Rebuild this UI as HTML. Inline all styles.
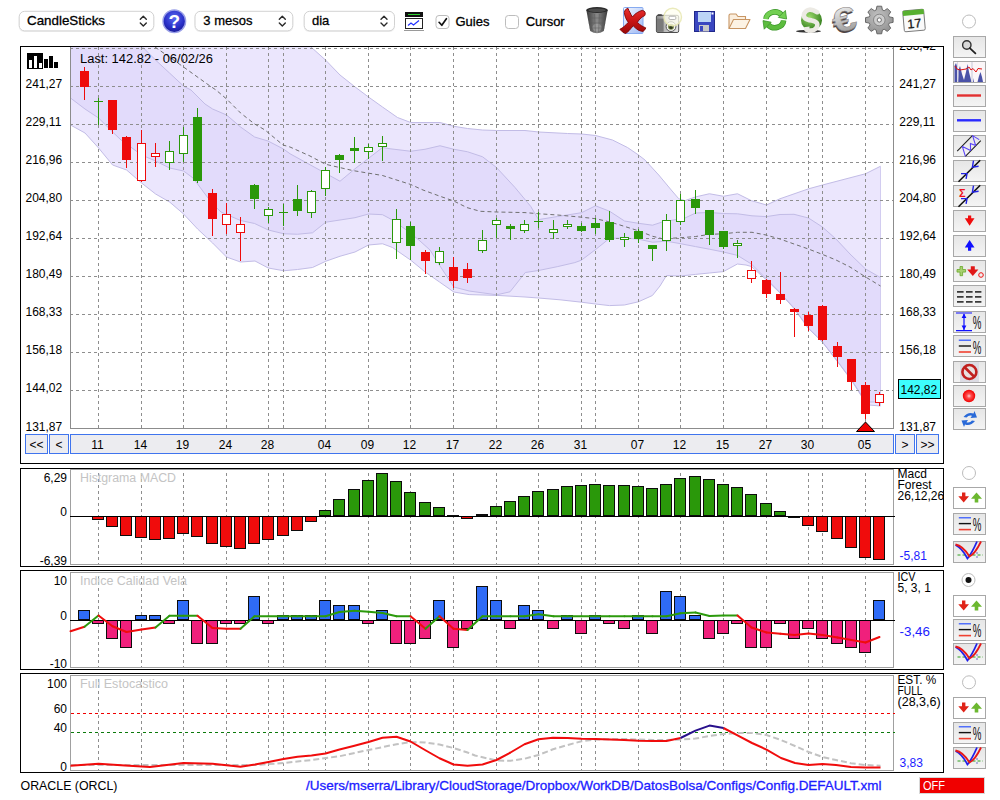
<!DOCTYPE html>
<html><head><meta charset="utf-8"><title>ORACLE (ORCL)</title>
<style>
html,body{margin:0;padding:0;background:#fff;overflow:hidden}
svg{display:block}
text{font-family:'Liberation Sans', sans-serif;}
</style></head><body>
<svg width="1000" height="800" viewBox="0 0 1000 800">
<defs>
<clipPath id="cpMain"><rect x="70" y="47" width="824" height="381"/></clipPath>
<clipPath id="cpR"><rect x="894" y="460" width="49.5" height="320"/></clipPath>
<clipPath id="cpAxis"><rect x="21" y="47" width="922" height="400"/></clipPath>
<linearGradient id="btn" x1="0" y1="0" x2="0" y2="1"><stop offset="0" stop-color="#e6e6e6"/><stop offset="1" stop-color="#f4f4f4"/></linearGradient>
<radialGradient id="help" cx="0.5" cy="0.35" r="0.7"><stop offset="0" stop-color="#5a6af0"/><stop offset="0.6" stop-color="#2a30c8"/><stop offset="1" stop-color="#15158a"/></radialGradient>
<radialGradient id="redball" cx="0.5" cy="0.5" r="0.5"><stop offset="0" stop-color="#ffd0d0"/><stop offset="0.35" stop-color="#ff5050"/><stop offset="1" stop-color="#f00000"/></radialGradient>
<linearGradient id="trash" x1="0" y1="0" x2="1" y2="0"><stop offset="0" stop-color="#3a3a3a"/><stop offset="0.5" stop-color="#8a8a8a"/><stop offset="1" stop-color="#3a3a3a"/></linearGradient>
<radialGradient id="gball" cx="0.4" cy="0.35" r="0.7"><stop offset="0" stop-color="#9ad86a"/><stop offset="1" stop-color="#2f7a1a"/></radialGradient>
<linearGradient id="silver" x1="0" y1="0" x2="0" y2="1"><stop offset="0" stop-color="#fafafa"/><stop offset="0.5" stop-color="#c4c4c4"/><stop offset="1" stop-color="#8c8c8c"/></linearGradient>
<radialGradient id="gearg" cx="0.45" cy="0.35" r="0.75"><stop offset="0" stop-color="#c2c2c2"/><stop offset="1" stop-color="#8a8a8a"/></radialGradient>
<linearGradient id="pageg" x1="0" y1="0" x2="1" y2="1"><stop offset="0" stop-color="#f4f8ff"/><stop offset="1" stop-color="#9db8f4"/></linearGradient>
<linearGradient id="xred" x1="0" y1="0" x2="0" y2="1"><stop offset="0" stop-color="#e83030"/><stop offset="0.5" stop-color="#c81414"/><stop offset="1" stop-color="#9a0808"/></linearGradient>
<linearGradient id="camg" x1="0" y1="0" x2="1" y2="0"><stop offset="0" stop-color="#8a8a8a"/><stop offset="0.35" stop-color="#b8b8b8"/><stop offset="1" stop-color="#e6e6e6"/></linearGradient>
</defs>
<rect x="0" y="0" width="1000" height="800" fill="#fff"/>
<g clip-path="url(#cpMain)">
<polygon points="70.50,47.00 311.00,47.00 325.50,60.00 340.00,75.00 354.50,86.50 368.50,97.00 382.50,107.00 397.50,117.50 410.75,122.50 440.00,122.50 453.75,126.25 467.50,128.50 482.50,130.00 496.50,130.50 525.00,130.50 538.75,132.00 567.50,133.50 581.75,134.00 595.50,135.50 612.50,140.00 627.50,147.50 638.50,155.00 645.00,160.00 658.75,175.00 671.25,190.00 678.75,198.75 685.00,200.60 695.60,196.90 709.40,193.75 723.50,196.25 737.50,193.75 751.25,200.60 766.50,205.00 780.00,198.75 808.75,188.75 822.50,185.00 865.50,173.75 880.50,166.25 880.50,406.00 880.50,406.00 869.00,405.00 862.00,397.00 851.60,380.50 837.40,361.50 822.40,342.00 808.40,328.50 794.00,308.50 780.00,293.00 766.50,280.00 751.40,266.50 746.00,265.00 737.40,264.00 723.40,271.60 709.40,273.00 695.40,274.40 680.60,276.00 666.40,275.60 660.00,286.00 652.40,295.50 638.40,301.80 624.40,305.00 609.50,305.60 595.60,304.00 581.40,302.20 560.00,299.80 538.50,298.00 525.00,297.00 496.70,295.40 469.20,294.60 453.80,292.00 439.50,282.00 425.20,272.00 410.50,260.00 392.50,247.50 382.50,243.75 368.50,245.00 355.00,252.00 340.00,256.25 325.75,261.25 312.50,267.50 297.50,269.50 283.75,270.75 268.25,268.00 255.00,261.00 240.50,262.00 226.50,257.00 212.60,243.00 197.60,229.00 183.60,214.00 169.60,202.00 155.60,194.00 141.60,183.00 126.60,170.00 112.60,165.00 98.60,148.00 85.00,133.00 70.50,125.00" fill="#ebe6fd"/>
<polygon points="70.50,47.00 142.50,47.00 155.50,60.00 169.50,73.00 183.75,86.25 191.00,90.00 205.00,104.00 212.60,109.00 226.60,115.00 240.60,127.00 254.60,137.00 268.00,141.00 283.50,149.00 290.00,153.75 315.00,167.50 340.00,181.25 355.00,168.75 382.50,147.50 390.00,148.75 410.75,151.25 425.00,149.25 440.00,145.75 453.75,149.25 467.50,151.75 482.50,156.75 496.50,167.50 515.00,187.50 527.50,202.50 530.80,206.50 538.50,219.60 557.50,216.50 581.60,212.70 595.50,205.80 609.50,211.20 624.50,221.00 638.50,223.30 652.50,225.20 662.50,221.90 685.00,218.00 695.60,213.00 709.40,212.50 723.50,213.50 737.50,213.80 752.00,215.80 766.50,216.60 780.00,214.50 794.00,214.30 808.50,218.00 822.40,227.00 836.00,239.00 850.00,254.00 865.60,269.00 880.50,277.60 880.50,402.00 880.50,402.00 869.00,402.00 862.00,396.00 851.60,380.00 837.40,361.00 822.40,342.00 808.40,328.00 794.00,308.00 780.00,292.50 766.50,279.00 751.40,264.00 737.50,255.40 723.50,252.00 709.40,249.20 695.60,246.60 680.00,243.60 666.50,241.20 652.50,242.20 638.40,239.20 624.40,238.00 609.50,238.40 595.60,249.50 581.40,260.20 574.80,262.60 557.20,266.70 538.50,270.50 525.30,272.50 510.00,291.80 496.70,294.80 469.20,291.00 453.80,287.00 440.00,266.00 430.00,250.00 420.00,241.00 410.50,233.00 392.50,220.00 382.50,214.70 368.50,214.00 355.00,217.70 340.00,220.00 325.75,222.20 312.50,232.80 297.50,234.25 283.75,233.75 268.25,230.00 254.60,223.50 240.60,220.50 226.60,214.50 221.00,212.00 212.60,204.00 205.00,194.00 197.60,184.00 193.00,178.00 183.60,171.00 169.60,168.00 155.60,161.00 141.60,155.00 126.60,144.00 121.00,140.00 112.60,132.00 98.60,118.00 85.00,109.00 70.50,98.00" fill="#e2dbfb"/>
<polyline points="311.00,47.00 325.50,60.00 340.00,75.00 354.50,86.50 368.50,97.00 382.50,107.00 397.50,117.50 410.75,122.50 440.00,122.50 453.75,126.25 467.50,128.50 482.50,130.00 496.50,130.50 525.00,130.50 538.75,132.00 567.50,133.50 581.75,134.00 595.50,135.50 612.50,140.00 627.50,147.50 638.50,155.00 645.00,160.00 658.75,175.00 671.25,190.00 678.75,198.75 685.00,200.60 695.60,196.90 709.40,193.75 723.50,196.25 737.50,193.75 751.25,200.60 766.50,205.00 780.00,198.75 808.75,188.75 822.50,185.00 865.50,173.75 880.50,166.25" fill="none" stroke="#c2bce6" stroke-width="1"/>
<polyline points="70.50,125.00 85.00,133.00 98.60,148.00 112.60,165.00 126.60,170.00 141.60,183.00 155.60,194.00 169.60,202.00 183.60,214.00 197.60,229.00 212.60,243.00 226.50,257.00 240.50,262.00 255.00,261.00 268.25,268.00 283.75,270.75 297.50,269.50 312.50,267.50 325.75,261.25 340.00,256.25 355.00,252.00 368.50,245.00 382.50,243.75 392.50,247.50 410.50,260.00 425.20,272.00 439.50,282.00 453.80,292.00 469.20,294.60 496.70,295.40 525.00,297.00 538.50,298.00 560.00,299.80 581.40,302.20 595.60,304.00 609.50,305.60 624.40,305.00 638.40,301.80 652.40,295.50 660.00,286.00 666.40,275.60 680.60,276.00 695.40,274.40 709.40,273.00 723.40,271.60 737.40,264.00 746.00,265.00 751.40,266.50 766.50,280.00 780.00,293.00 794.00,308.50 808.40,328.50 822.40,342.00 837.40,361.50 851.60,380.50 862.00,397.00 869.00,405.00 880.50,406.00" fill="none" stroke="#c2bce6" stroke-width="1"/>
<polyline points="142.50,47.00 155.50,60.00 169.50,73.00 183.75,86.25 191.00,90.00 205.00,104.00 212.60,109.00 226.60,115.00 240.60,127.00 254.60,137.00 268.00,141.00 283.50,149.00 290.00,153.75 315.00,167.50 340.00,181.25 355.00,168.75 382.50,147.50 390.00,148.75 410.75,151.25 425.00,149.25 440.00,145.75 453.75,149.25 467.50,151.75 482.50,156.75 496.50,167.50 515.00,187.50 527.50,202.50 530.80,206.50 538.50,219.60 557.50,216.50 581.60,212.70 595.50,205.80 609.50,211.20 624.50,221.00 638.50,223.30 652.50,225.20 662.50,221.90 685.00,218.00 695.60,213.00 709.40,212.50 723.50,213.50 737.50,213.80 752.00,215.80 766.50,216.60 780.00,214.50 794.00,214.30 808.50,218.00 822.40,227.00 836.00,239.00 850.00,254.00 865.60,269.00 880.50,277.60" fill="none" stroke="#c2bce6" stroke-width="1"/>
<polyline points="70.50,98.00 85.00,109.00 98.60,118.00 112.60,132.00 121.00,140.00 126.60,144.00 141.60,155.00 155.60,161.00 169.60,168.00 183.60,171.00 193.00,178.00 197.60,184.00 205.00,194.00 212.60,204.00 221.00,212.00 226.60,214.50 240.60,220.50 254.60,223.50 268.25,230.00 283.75,233.75 297.50,234.25 312.50,232.80 325.75,222.20 340.00,220.00 355.00,217.70 368.50,214.00 382.50,214.70 392.50,220.00 410.50,233.00 420.00,241.00 430.00,250.00 440.00,266.00 453.80,287.00 469.20,291.00 496.70,294.80 510.00,291.80 525.30,272.50 538.50,270.50 557.20,266.70 574.80,262.60 581.40,260.20 595.60,249.50 609.50,238.40 624.40,238.00 638.40,239.20 652.50,242.20 666.50,241.20 680.00,243.60 695.60,246.60 709.40,249.20 723.50,252.00 737.50,255.40 751.40,264.00 766.50,279.00 780.00,292.50 794.00,308.00 808.40,328.00 822.40,342.00 837.40,361.00 851.60,380.00 862.00,396.00 869.00,402.00 880.50,402.00" fill="none" stroke="#c2bce6" stroke-width="1"/>
<line x1="880.5" y1="166.25" x2="880.5" y2="406" stroke="#d2ccf0" stroke-width="1"/>
</g>
<g shape-rendering="crispEdges">
<line x1="70" y1="48.5" x2="894" y2="48.5" stroke="#8e8e8e" stroke-width="1" stroke-dasharray="3 3"/>
<line x1="70" y1="86.5" x2="894" y2="86.5" stroke="#8e8e8e" stroke-width="1" stroke-dasharray="3 3"/>
<line x1="70" y1="124.5" x2="894" y2="124.5" stroke="#8e8e8e" stroke-width="1" stroke-dasharray="3 3"/>
<line x1="70" y1="162.5" x2="894" y2="162.5" stroke="#8e8e8e" stroke-width="1" stroke-dasharray="3 3"/>
<line x1="70" y1="200.5" x2="894" y2="200.5" stroke="#8e8e8e" stroke-width="1" stroke-dasharray="3 3"/>
<line x1="70" y1="238.5" x2="894" y2="238.5" stroke="#8e8e8e" stroke-width="1" stroke-dasharray="3 3"/>
<line x1="70" y1="276.5" x2="894" y2="276.5" stroke="#8e8e8e" stroke-width="1" stroke-dasharray="3 3"/>
<line x1="70" y1="314.5" x2="894" y2="314.5" stroke="#8e8e8e" stroke-width="1" stroke-dasharray="3 3"/>
<line x1="70" y1="352.5" x2="894" y2="352.5" stroke="#8e8e8e" stroke-width="1" stroke-dasharray="3 3"/>
<line x1="70" y1="390.5" x2="894" y2="390.5" stroke="#8e8e8e" stroke-width="1" stroke-dasharray="3 3"/>
<line x1="98.5" y1="47" x2="98.5" y2="428" stroke="#8e8e8e" stroke-width="1" stroke-dasharray="3 3"/>
<line x1="141.5" y1="47" x2="141.5" y2="428" stroke="#8e8e8e" stroke-width="1" stroke-dasharray="3 3"/>
<line x1="183.5" y1="47" x2="183.5" y2="428" stroke="#8e8e8e" stroke-width="1" stroke-dasharray="3 3"/>
<line x1="226.5" y1="47" x2="226.5" y2="428" stroke="#8e8e8e" stroke-width="1" stroke-dasharray="3 3"/>
<line x1="268.5" y1="47" x2="268.5" y2="428" stroke="#8e8e8e" stroke-width="1" stroke-dasharray="3 3"/>
<line x1="283.5" y1="47" x2="283.5" y2="428" stroke="#8e8e8e" stroke-width="1" stroke-dasharray="3 3"/>
<line x1="325.5" y1="47" x2="325.5" y2="428" stroke="#8e8e8e" stroke-width="1" stroke-dasharray="3 3"/>
<line x1="368.5" y1="47" x2="368.5" y2="428" stroke="#8e8e8e" stroke-width="1" stroke-dasharray="3 3"/>
<line x1="410.5" y1="47" x2="410.5" y2="428" stroke="#8e8e8e" stroke-width="1" stroke-dasharray="3 3"/>
<line x1="453.5" y1="47" x2="453.5" y2="428" stroke="#8e8e8e" stroke-width="1" stroke-dasharray="3 3"/>
<line x1="496.5" y1="47" x2="496.5" y2="428" stroke="#8e8e8e" stroke-width="1" stroke-dasharray="3 3"/>
<line x1="538.5" y1="47" x2="538.5" y2="428" stroke="#8e8e8e" stroke-width="1" stroke-dasharray="3 3"/>
<line x1="581.5" y1="47" x2="581.5" y2="428" stroke="#8e8e8e" stroke-width="1" stroke-dasharray="3 3"/>
<line x1="595.5" y1="47" x2="595.5" y2="428" stroke="#8e8e8e" stroke-width="1" stroke-dasharray="3 3"/>
<line x1="638.5" y1="47" x2="638.5" y2="428" stroke="#8e8e8e" stroke-width="1" stroke-dasharray="3 3"/>
<line x1="680.5" y1="47" x2="680.5" y2="428" stroke="#8e8e8e" stroke-width="1" stroke-dasharray="3 3"/>
<line x1="723.5" y1="47" x2="723.5" y2="428" stroke="#8e8e8e" stroke-width="1" stroke-dasharray="3 3"/>
<line x1="766.5" y1="47" x2="766.5" y2="428" stroke="#8e8e8e" stroke-width="1" stroke-dasharray="3 3"/>
<line x1="808.5" y1="47" x2="808.5" y2="428" stroke="#8e8e8e" stroke-width="1" stroke-dasharray="3 3"/>
<line x1="822.5" y1="47" x2="822.5" y2="428" stroke="#8e8e8e" stroke-width="1" stroke-dasharray="3 3"/>
<line x1="865.5" y1="47" x2="865.5" y2="428" stroke="#8e8e8e" stroke-width="1" stroke-dasharray="3 3"/>
</g>
<g clip-path="url(#cpMain)"><polyline points="155.00,47.00 183.50,67.00 210.00,86.00 216.00,90.00 226.60,99.00 240.60,113.00 254.60,124.00 265.00,130.00 283.00,145.00 290.00,147.00 310.00,156.00 325.50,164.25 352.50,170.50 382.50,175.50 410.75,184.50 423.00,190.00 440.00,196.25 453.80,201.00 467.00,207.60 480.20,211.30 496.70,212.00 525.00,212.60 538.75,213.75 557.50,215.00 581.75,217.20 595.50,218.70 610.00,222.00 620.00,225.00 638.50,230.80 652.50,236.25 662.50,238.75 680.00,237.75 695.60,236.50 709.40,234.40 723.50,233.75 737.50,232.30 752.00,232.30 766.00,235.00 780.00,239.00 794.00,244.00 808.40,249.00 822.40,254.40 836.00,260.00 850.00,267.00 865.60,277.00 880.50,286.00" fill="none" stroke="#707070" stroke-width="1" stroke-dasharray="4 3"/></g>
<g shape-rendering="crispEdges">
<line x1="70.5" y1="47" x2="70.5" y2="429" stroke="#8c8c8c" stroke-width="1"/>
<line x1="893.5" y1="47" x2="893.5" y2="429" stroke="#8c8c8c" stroke-width="1"/>
<line x1="70" y1="428.5" x2="894" y2="428.5" stroke="#8c8c8c" stroke-width="1"/>
</g>
<g shape-rendering="crispEdges">
<rect x="84" y="67" width="1" height="33" fill="#ee0b0b"/>
<rect x="80" y="71" width="9" height="16" fill="#ee0b0b"/>
<rect x="98" y="98" width="1" height="27" fill="#2a980a"/>
<rect x="94" y="101" width="9" height="1" fill="#2a980a"/>
<rect x="112" y="100" width="1" height="34" fill="#ee0b0b"/>
<rect x="108" y="100" width="9" height="30" fill="#ee0b0b"/>
<rect x="126" y="136" width="1" height="32" fill="#ee0b0b"/>
<rect x="122" y="137" width="9" height="23" fill="#ee0b0b"/>
<rect x="141" y="130" width="1" height="52" fill="#ee0b0b"/>
<rect x="137.5" y="143.5" width="8" height="37" fill="#fff" stroke="#ee0b0b" stroke-width="1"/>
<rect x="155" y="143" width="1" height="24" fill="#ee0b0b"/>
<rect x="151.5" y="153.5" width="8" height="3" fill="#fff" stroke="#ee0b0b" stroke-width="1"/>
<rect x="169" y="141" width="1" height="29" fill="#2a980a"/>
<rect x="165.5" y="151.5" width="8" height="11" fill="#fff" stroke="#2a980a" stroke-width="1"/>
<rect x="183" y="127" width="1" height="35" fill="#2a980a"/>
<rect x="179.5" y="135.5" width="8" height="18" fill="#fff" stroke="#2a980a" stroke-width="1"/>
<rect x="197" y="108" width="1" height="75" fill="#2a980a"/>
<rect x="193" y="117" width="9" height="64" fill="#2a980a"/>
<rect x="212" y="189" width="1" height="47" fill="#ee0b0b"/>
<rect x="208" y="193" width="9" height="26" fill="#ee0b0b"/>
<rect x="226" y="203" width="1" height="31" fill="#ee0b0b"/>
<rect x="222.5" y="214.5" width="8" height="10" fill="#fff" stroke="#ee0b0b" stroke-width="1"/>
<rect x="240" y="217" width="1" height="44" fill="#ee0b0b"/>
<rect x="236.5" y="224.5" width="8" height="8" fill="#fff" stroke="#ee0b0b" stroke-width="1"/>
<rect x="254" y="184" width="1" height="25" fill="#2a980a"/>
<rect x="250" y="185" width="9" height="14" fill="#2a980a"/>
<rect x="268" y="207" width="1" height="16" fill="#2a980a"/>
<rect x="264.5" y="209.5" width="8" height="6" fill="#fff" stroke="#2a980a" stroke-width="1"/>
<rect x="283" y="204" width="1" height="22" fill="#2a980a"/>
<rect x="279" y="212" width="9" height="1" fill="#2a980a"/>
<rect x="297" y="185" width="1" height="31" fill="#2a980a"/>
<rect x="293" y="199" width="9" height="12" fill="#2a980a"/>
<rect x="311" y="190" width="1" height="28" fill="#2a980a"/>
<rect x="307.5" y="191.5" width="8" height="21" fill="#fff" stroke="#2a980a" stroke-width="1"/>
<rect x="325" y="167" width="1" height="29" fill="#2a980a"/>
<rect x="321.5" y="170.5" width="8" height="18" fill="#fff" stroke="#2a980a" stroke-width="1"/>
<rect x="339" y="154" width="1" height="19" fill="#2a980a"/>
<rect x="335" y="155" width="9" height="5" fill="#2a980a"/>
<rect x="354" y="137" width="1" height="26" fill="#2a980a"/>
<rect x="350" y="148" width="9" height="3" fill="#2a980a"/>
<rect x="368" y="144" width="1" height="15" fill="#2a980a"/>
<rect x="364.5" y="147.5" width="8" height="4" fill="#fff" stroke="#2a980a" stroke-width="1"/>
<rect x="382" y="136" width="1" height="25" fill="#2a980a"/>
<rect x="378.5" y="143.5" width="8" height="3" fill="#fff" stroke="#2a980a" stroke-width="1"/>
<rect x="396" y="209" width="1" height="50" fill="#2a980a"/>
<rect x="392.5" y="219.5" width="8" height="23" fill="#fff" stroke="#2a980a" stroke-width="1"/>
<rect x="410" y="222" width="1" height="38" fill="#2a980a"/>
<rect x="406" y="226" width="9" height="20" fill="#2a980a"/>
<rect x="425" y="250" width="1" height="24" fill="#ee0b0b"/>
<rect x="421" y="252" width="9" height="9" fill="#ee0b0b"/>
<rect x="439" y="247" width="1" height="18" fill="#2a980a"/>
<rect x="435.5" y="251.5" width="8" height="11" fill="#fff" stroke="#2a980a" stroke-width="1"/>
<rect x="453" y="257" width="1" height="31" fill="#ee0b0b"/>
<rect x="449" y="267" width="9" height="14" fill="#ee0b0b"/>
<rect x="467" y="263" width="1" height="20" fill="#ee0b0b"/>
<rect x="463" y="269" width="9" height="9" fill="#ee0b0b"/>
<rect x="482" y="230" width="1" height="23" fill="#2a980a"/>
<rect x="478.5" y="240.5" width="8" height="10" fill="#fff" stroke="#2a980a" stroke-width="1"/>
<rect x="496" y="218" width="1" height="20" fill="#2a980a"/>
<rect x="492.5" y="220.5" width="8" height="4" fill="#fff" stroke="#2a980a" stroke-width="1"/>
<rect x="510" y="224" width="1" height="16" fill="#2a980a"/>
<rect x="506" y="226" width="9" height="3" fill="#2a980a"/>
<rect x="524" y="220" width="1" height="13" fill="#2a980a"/>
<rect x="520.5" y="224.5" width="8" height="6" fill="#fff" stroke="#2a980a" stroke-width="1"/>
<rect x="538" y="212" width="1" height="16" fill="#2a980a"/>
<rect x="534" y="221" width="9" height="1" fill="#2a980a"/>
<rect x="553" y="220" width="1" height="19" fill="#2a980a"/>
<rect x="549.5" y="229.5" width="8" height="3" fill="#fff" stroke="#2a980a" stroke-width="1"/>
<rect x="567" y="220" width="1" height="9" fill="#2a980a"/>
<rect x="563.5" y="224.5" width="8" height="2" fill="#fff" stroke="#2a980a" stroke-width="1"/>
<rect x="581" y="223" width="1" height="9" fill="#2a980a"/>
<rect x="577" y="226" width="9" height="5" fill="#2a980a"/>
<rect x="595" y="218" width="1" height="16" fill="#2a980a"/>
<rect x="591" y="223" width="9" height="5" fill="#2a980a"/>
<rect x="609" y="211" width="1" height="31" fill="#2a980a"/>
<rect x="605" y="222" width="9" height="18" fill="#2a980a"/>
<rect x="624" y="233" width="1" height="14" fill="#2a980a"/>
<rect x="620.5" y="237.5" width="8" height="2" fill="#fff" stroke="#2a980a" stroke-width="1"/>
<rect x="638" y="229" width="1" height="14" fill="#2a980a"/>
<rect x="634" y="231" width="9" height="8" fill="#2a980a"/>
<rect x="652" y="245" width="1" height="16" fill="#2a980a"/>
<rect x="648" y="245" width="9" height="4" fill="#2a980a"/>
<rect x="666" y="214" width="1" height="37" fill="#2a980a"/>
<rect x="662.5" y="220.5" width="8" height="20" fill="#fff" stroke="#2a980a" stroke-width="1"/>
<rect x="680" y="194" width="1" height="31" fill="#2a980a"/>
<rect x="676.5" y="200.5" width="8" height="21" fill="#fff" stroke="#2a980a" stroke-width="1"/>
<rect x="695" y="190" width="1" height="24" fill="#2a980a"/>
<rect x="691" y="199" width="9" height="9" fill="#2a980a"/>
<rect x="709" y="210" width="1" height="35" fill="#2a980a"/>
<rect x="705" y="210" width="9" height="25" fill="#2a980a"/>
<rect x="723" y="231" width="1" height="18" fill="#2a980a"/>
<rect x="719" y="231" width="9" height="16" fill="#2a980a"/>
<rect x="737" y="240" width="1" height="18" fill="#2a980a"/>
<rect x="733.5" y="243.5" width="8" height="2" fill="#fff" stroke="#2a980a" stroke-width="1"/>
<rect x="751" y="261" width="1" height="22" fill="#ee0b0b"/>
<rect x="747.5" y="270.5" width="8" height="8" fill="#fff" stroke="#ee0b0b" stroke-width="1"/>
<rect x="766" y="279" width="1" height="19" fill="#ee0b0b"/>
<rect x="762" y="280" width="9" height="14" fill="#ee0b0b"/>
<rect x="780" y="272" width="1" height="32" fill="#ee0b0b"/>
<rect x="776" y="294" width="9" height="6" fill="#ee0b0b"/>
<rect x="794" y="308" width="1" height="29" fill="#ee0b0b"/>
<rect x="790" y="309" width="9" height="3" fill="#ee0b0b"/>
<rect x="808" y="312" width="1" height="19" fill="#ee0b0b"/>
<rect x="804" y="315" width="9" height="11" fill="#ee0b0b"/>
<rect x="822" y="305" width="1" height="36" fill="#ee0b0b"/>
<rect x="818" y="306" width="9" height="34" fill="#ee0b0b"/>
<rect x="837" y="342" width="1" height="25" fill="#ee0b0b"/>
<rect x="833" y="346" width="9" height="11" fill="#ee0b0b"/>
<rect x="851" y="359" width="1" height="31" fill="#ee0b0b"/>
<rect x="847" y="359" width="9" height="23" fill="#ee0b0b"/>
<rect x="865" y="382" width="1" height="37" fill="#ee0b0b"/>
<rect x="861" y="385" width="9" height="29" fill="#ee0b0b"/>
<rect x="879" y="392" width="1" height="14" fill="#ee0b0b"/>
<rect x="875.5" y="394.5" width="8" height="8" fill="#fff" stroke="#ee0b0b" stroke-width="1"/>
</g>
<polygon points="865.5,422 856.5,431.5 874.5,431.5" fill="#f00000" stroke="#000" stroke-width="1"/>
<g clip-path="url(#cpAxis)">
<text x="899.3" y="50" font-size="12" fill="#000" text-anchor="start" >253,42</text>
<text x="25.5" y="88" font-size="12" fill="#000" text-anchor="start" >241,27</text>
<text x="899.3" y="88" font-size="12" fill="#000" text-anchor="start" >241,27</text>
<text x="25.5" y="126" font-size="12" fill="#000" text-anchor="start" >229,11</text>
<text x="899.3" y="126" font-size="12" fill="#000" text-anchor="start" >229,11</text>
<text x="25.5" y="164" font-size="12" fill="#000" text-anchor="start" >216,96</text>
<text x="899.3" y="164" font-size="12" fill="#000" text-anchor="start" >216,96</text>
<text x="25.5" y="202" font-size="12" fill="#000" text-anchor="start" >204,80</text>
<text x="899.3" y="202" font-size="12" fill="#000" text-anchor="start" >204,80</text>
<text x="25.5" y="240" font-size="12" fill="#000" text-anchor="start" >192,64</text>
<text x="899.3" y="240" font-size="12" fill="#000" text-anchor="start" >192,64</text>
<text x="25.5" y="278" font-size="12" fill="#000" text-anchor="start" >180,49</text>
<text x="899.3" y="278" font-size="12" fill="#000" text-anchor="start" >180,49</text>
<text x="25.5" y="316" font-size="12" fill="#000" text-anchor="start" >168,33</text>
<text x="899.3" y="316" font-size="12" fill="#000" text-anchor="start" >168,33</text>
<text x="25.5" y="354" font-size="12" fill="#000" text-anchor="start" >156,18</text>
<text x="899.3" y="354" font-size="12" fill="#000" text-anchor="start" >156,18</text>
<text x="25.5" y="392" font-size="12" fill="#000" text-anchor="start" >144,02</text>
<text x="25.5" y="431" font-size="12" fill="#000" text-anchor="start" >131,87</text>
<text x="899.3" y="431" font-size="12" fill="#000" text-anchor="start" >131,87</text>
</g>
<text x="80" y="63" font-size="12" fill="#000" text-anchor="start"  textLength="133" lengthAdjust="spacingAndGlyphs">Last: 142.82 - 06/02/26</text>
<rect x="898.5" y="379.5" width="42" height="19" fill="#3dfdfd" stroke="#000" stroke-width="1" shape-rendering="crispEdges"/>
<text x="900.5" y="394" font-size="12" fill="#000" text-anchor="start" >142,82</text>
<g shape-rendering="crispEdges">
<rect x="27" y="53" width="16" height="16" fill="#000"/>
<rect x="29" y="60" width="3" height="8" fill="#fff"/><rect x="34" y="56" width="3" height="12" fill="#fff"/><rect x="39" y="63" width="3" height="5" fill="#fff"/>
<rect x="44" y="59" width="4" height="9" fill="#000"/><rect x="49" y="56" width="4" height="12" fill="#000"/><rect x="54" y="62" width="4" height="6" fill="#000"/>
</g>
<g shape-rendering="crispEdges">
<rect x="25.5" y="434.5" width="22" height="19" fill="#ececf0" stroke="#3f74ee" stroke-width="1"/>
<rect x="49.5" y="434.5" width="19" height="19" fill="#ececf0" stroke="#3f74ee" stroke-width="1"/>
<rect x="70.5" y="434.5" width="823" height="19" fill="#ececf0" stroke="#3f74ee" stroke-width="1"/>
<rect x="895.5" y="434.5" width="19" height="19" fill="#ececf0" stroke="#3f74ee" stroke-width="1"/>
<rect x="916.5" y="434.5" width="22" height="19" fill="#ececf0" stroke="#3f74ee" stroke-width="1"/>
</g>
<text x="36.5" y="449" font-size="12" fill="#000" text-anchor="middle" >&lt;&lt;</text>
<text x="59" y="449" font-size="12" fill="#000" text-anchor="middle" >&lt;</text>
<text x="905" y="449" font-size="12" fill="#000" text-anchor="middle" >&gt;</text>
<text x="927.5" y="449" font-size="12" fill="#000" text-anchor="middle" >&gt;&gt;</text>
<text x="97.5" y="449" font-size="12" fill="#000" text-anchor="middle" >11</text>
<text x="140.5" y="449" font-size="12" fill="#000" text-anchor="middle" >14</text>
<text x="182.5" y="449" font-size="12" fill="#000" text-anchor="middle" >19</text>
<text x="225.5" y="449" font-size="12" fill="#000" text-anchor="middle" >24</text>
<text x="267.5" y="449" font-size="12" fill="#000" text-anchor="middle" >28</text>
<text x="324.5" y="449" font-size="12" fill="#000" text-anchor="middle" >04</text>
<text x="367.5" y="449" font-size="12" fill="#000" text-anchor="middle" >09</text>
<text x="409.5" y="449" font-size="12" fill="#000" text-anchor="middle" >12</text>
<text x="452.5" y="449" font-size="12" fill="#000" text-anchor="middle" >17</text>
<text x="495.5" y="449" font-size="12" fill="#000" text-anchor="middle" >22</text>
<text x="537.5" y="449" font-size="12" fill="#000" text-anchor="middle" >26</text>
<text x="580.5" y="449" font-size="12" fill="#000" text-anchor="middle" >31</text>
<text x="637.5" y="449" font-size="12" fill="#000" text-anchor="middle" >07</text>
<text x="679.5" y="449" font-size="12" fill="#000" text-anchor="middle" >12</text>
<text x="722.5" y="449" font-size="12" fill="#000" text-anchor="middle" >15</text>
<text x="765.5" y="449" font-size="12" fill="#000" text-anchor="middle" >27</text>
<text x="807.5" y="449" font-size="12" fill="#000" text-anchor="middle" >30</text>
<text x="864.5" y="449" font-size="12" fill="#000" text-anchor="middle" >05</text>
<rect x="20.5" y="46.5" width="923" height="417" fill="none" stroke="#000" stroke-width="1" shape-rendering="crispEdges"/>
<g shape-rendering="crispEdges">
<rect x="20.5" y="468.5" width="923" height="98" fill="none" stroke="#000" stroke-width="1"/>
<rect x="70.5" y="469.5" width="823" height="95" fill="none" stroke="#a0a0a0" stroke-width="1"/>
<line x1="98.5" y1="473" x2="98.5" y2="564" stroke="#8e8e8e" stroke-width="1" stroke-dasharray="3 3"/>
<line x1="141.5" y1="473" x2="141.5" y2="564" stroke="#8e8e8e" stroke-width="1" stroke-dasharray="3 3"/>
<line x1="183.5" y1="473" x2="183.5" y2="564" stroke="#8e8e8e" stroke-width="1" stroke-dasharray="3 3"/>
<line x1="226.5" y1="473" x2="226.5" y2="564" stroke="#8e8e8e" stroke-width="1" stroke-dasharray="3 3"/>
<line x1="268.5" y1="473" x2="268.5" y2="564" stroke="#8e8e8e" stroke-width="1" stroke-dasharray="3 3"/>
<line x1="283.5" y1="473" x2="283.5" y2="564" stroke="#8e8e8e" stroke-width="1" stroke-dasharray="3 3"/>
<line x1="325.5" y1="473" x2="325.5" y2="564" stroke="#8e8e8e" stroke-width="1" stroke-dasharray="3 3"/>
<line x1="368.5" y1="473" x2="368.5" y2="564" stroke="#8e8e8e" stroke-width="1" stroke-dasharray="3 3"/>
<line x1="410.5" y1="473" x2="410.5" y2="564" stroke="#8e8e8e" stroke-width="1" stroke-dasharray="3 3"/>
<line x1="453.5" y1="473" x2="453.5" y2="564" stroke="#8e8e8e" stroke-width="1" stroke-dasharray="3 3"/>
<line x1="496.5" y1="473" x2="496.5" y2="564" stroke="#8e8e8e" stroke-width="1" stroke-dasharray="3 3"/>
<line x1="538.5" y1="473" x2="538.5" y2="564" stroke="#8e8e8e" stroke-width="1" stroke-dasharray="3 3"/>
<line x1="581.5" y1="473" x2="581.5" y2="564" stroke="#8e8e8e" stroke-width="1" stroke-dasharray="3 3"/>
<line x1="595.5" y1="473" x2="595.5" y2="564" stroke="#8e8e8e" stroke-width="1" stroke-dasharray="3 3"/>
<line x1="638.5" y1="473" x2="638.5" y2="564" stroke="#8e8e8e" stroke-width="1" stroke-dasharray="3 3"/>
<line x1="680.5" y1="473" x2="680.5" y2="564" stroke="#8e8e8e" stroke-width="1" stroke-dasharray="3 3"/>
<line x1="723.5" y1="473" x2="723.5" y2="564" stroke="#8e8e8e" stroke-width="1" stroke-dasharray="3 3"/>
<line x1="766.5" y1="473" x2="766.5" y2="564" stroke="#8e8e8e" stroke-width="1" stroke-dasharray="3 3"/>
<line x1="808.5" y1="473" x2="808.5" y2="564" stroke="#8e8e8e" stroke-width="1" stroke-dasharray="3 3"/>
<line x1="822.5" y1="473" x2="822.5" y2="564" stroke="#8e8e8e" stroke-width="1" stroke-dasharray="3 3"/>
<line x1="865.5" y1="473" x2="865.5" y2="564" stroke="#8e8e8e" stroke-width="1" stroke-dasharray="3 3"/>
</g>
<text x="80" y="482" font-size="12" fill="#c4c4c4" text-anchor="start"  textLength="96" lengthAdjust="spacingAndGlyphs">Histgrama MACD</text>
<g shape-rendering="crispEdges">
<rect x="92.5" y="516.5" width="11" height="3" fill="#f00c0c" stroke="#0c0c0c" stroke-width="1"/>
<rect x="106.5" y="516.5" width="11" height="10" fill="#f00c0c" stroke="#0c0c0c" stroke-width="1"/>
<rect x="120.5" y="516.5" width="11" height="19" fill="#f00c0c" stroke="#0c0c0c" stroke-width="1"/>
<rect x="135.5" y="516.5" width="11" height="21" fill="#f00c0c" stroke="#0c0c0c" stroke-width="1"/>
<rect x="149.5" y="516.5" width="11" height="23" fill="#f00c0c" stroke="#0c0c0c" stroke-width="1"/>
<rect x="163.5" y="516.5" width="11" height="22" fill="#f00c0c" stroke="#0c0c0c" stroke-width="1"/>
<rect x="177.5" y="516.5" width="11" height="17" fill="#f00c0c" stroke="#0c0c0c" stroke-width="1"/>
<rect x="191.5" y="516.5" width="11" height="20" fill="#f00c0c" stroke="#0c0c0c" stroke-width="1"/>
<rect x="206.5" y="516.5" width="11" height="27" fill="#f00c0c" stroke="#0c0c0c" stroke-width="1"/>
<rect x="220.5" y="516.5" width="11" height="30" fill="#f00c0c" stroke="#0c0c0c" stroke-width="1"/>
<rect x="234.5" y="516.5" width="11" height="32" fill="#f00c0c" stroke="#0c0c0c" stroke-width="1"/>
<rect x="248.5" y="516.5" width="11" height="27" fill="#f00c0c" stroke="#0c0c0c" stroke-width="1"/>
<rect x="262.5" y="516.5" width="11" height="23" fill="#f00c0c" stroke="#0c0c0c" stroke-width="1"/>
<rect x="277.5" y="516.5" width="11" height="19" fill="#f00c0c" stroke="#0c0c0c" stroke-width="1"/>
<rect x="291.5" y="516.5" width="11" height="14" fill="#f00c0c" stroke="#0c0c0c" stroke-width="1"/>
<rect x="305.5" y="516.5" width="11" height="5" fill="#f00c0c" stroke="#0c0c0c" stroke-width="1"/>
<rect x="319.5" y="510.5" width="11" height="5" fill="#2a980a" stroke="#0c0c0c" stroke-width="1"/>
<rect x="333.5" y="499.5" width="11" height="16" fill="#2a980a" stroke="#0c0c0c" stroke-width="1"/>
<rect x="348.5" y="489.5" width="11" height="26" fill="#2a980a" stroke="#0c0c0c" stroke-width="1"/>
<rect x="362.5" y="480.5" width="11" height="35" fill="#2a980a" stroke="#0c0c0c" stroke-width="1"/>
<rect x="376.5" y="473.5" width="11" height="42" fill="#2a980a" stroke="#0c0c0c" stroke-width="1"/>
<rect x="390.5" y="481.5" width="11" height="34" fill="#2a980a" stroke="#0c0c0c" stroke-width="1"/>
<rect x="404.5" y="492.5" width="11" height="23" fill="#2a980a" stroke="#0c0c0c" stroke-width="1"/>
<rect x="419.5" y="502.5" width="11" height="13" fill="#2a980a" stroke="#0c0c0c" stroke-width="1"/>
<rect x="433.5" y="507.5" width="11" height="8" fill="#2a980a" stroke="#0c0c0c" stroke-width="1"/>
<rect x="447" y="515" width="12" height="1" fill="#0c0c0c"/>
<rect x="461.5" y="516.5" width="11" height="2" fill="#f00c0c" stroke="#0c0c0c" stroke-width="1"/>
<rect x="476.5" y="514.5" width="11" height="1" fill="#2a980a" stroke="#0c0c0c" stroke-width="1"/>
<rect x="490.5" y="506.5" width="11" height="9" fill="#2a980a" stroke="#0c0c0c" stroke-width="1"/>
<rect x="504.5" y="501.5" width="11" height="14" fill="#2a980a" stroke="#0c0c0c" stroke-width="1"/>
<rect x="518.5" y="496.5" width="11" height="19" fill="#2a980a" stroke="#0c0c0c" stroke-width="1"/>
<rect x="532.5" y="491.5" width="11" height="24" fill="#2a980a" stroke="#0c0c0c" stroke-width="1"/>
<rect x="547.5" y="489.5" width="11" height="26" fill="#2a980a" stroke="#0c0c0c" stroke-width="1"/>
<rect x="561.5" y="486.5" width="11" height="29" fill="#2a980a" stroke="#0c0c0c" stroke-width="1"/>
<rect x="575.5" y="485.5" width="11" height="30" fill="#2a980a" stroke="#0c0c0c" stroke-width="1"/>
<rect x="589.5" y="484.5" width="11" height="31" fill="#2a980a" stroke="#0c0c0c" stroke-width="1"/>
<rect x="603.5" y="485.5" width="11" height="30" fill="#2a980a" stroke="#0c0c0c" stroke-width="1"/>
<rect x="618.5" y="485.5" width="11" height="30" fill="#2a980a" stroke="#0c0c0c" stroke-width="1"/>
<rect x="632.5" y="486.5" width="11" height="29" fill="#2a980a" stroke="#0c0c0c" stroke-width="1"/>
<rect x="646.5" y="488.5" width="11" height="27" fill="#2a980a" stroke="#0c0c0c" stroke-width="1"/>
<rect x="660.5" y="484.5" width="11" height="31" fill="#2a980a" stroke="#0c0c0c" stroke-width="1"/>
<rect x="674.5" y="478.5" width="11" height="37" fill="#2a980a" stroke="#0c0c0c" stroke-width="1"/>
<rect x="689.5" y="476.5" width="11" height="39" fill="#2a980a" stroke="#0c0c0c" stroke-width="1"/>
<rect x="703.5" y="479.5" width="11" height="36" fill="#2a980a" stroke="#0c0c0c" stroke-width="1"/>
<rect x="717.5" y="484.5" width="11" height="31" fill="#2a980a" stroke="#0c0c0c" stroke-width="1"/>
<rect x="731.5" y="487.5" width="11" height="28" fill="#2a980a" stroke="#0c0c0c" stroke-width="1"/>
<rect x="745.5" y="494.5" width="11" height="21" fill="#2a980a" stroke="#0c0c0c" stroke-width="1"/>
<rect x="760.5" y="503.5" width="11" height="12" fill="#2a980a" stroke="#0c0c0c" stroke-width="1"/>
<rect x="774.5" y="511.5" width="11" height="4" fill="#2a980a" stroke="#0c0c0c" stroke-width="1"/>
<rect x="788.5" y="516.5" width="11" height="1" fill="#f00c0c" stroke="#0c0c0c" stroke-width="1"/>
<rect x="802.5" y="516.5" width="11" height="9" fill="#f00c0c" stroke="#0c0c0c" stroke-width="1"/>
<rect x="816.5" y="516.5" width="11" height="15" fill="#f00c0c" stroke="#0c0c0c" stroke-width="1"/>
<rect x="831.5" y="516.5" width="11" height="22" fill="#f00c0c" stroke="#0c0c0c" stroke-width="1"/>
<rect x="845.5" y="516.5" width="11" height="31" fill="#f00c0c" stroke="#0c0c0c" stroke-width="1"/>
<rect x="859.5" y="516.5" width="11" height="41" fill="#f00c0c" stroke="#0c0c0c" stroke-width="1"/>
<rect x="873.5" y="516.5" width="11" height="43" fill="#f00c0c" stroke="#0c0c0c" stroke-width="1"/>
<line x1="70" y1="516.5" x2="895" y2="516.5" stroke="#000" stroke-width="1"/>
</g>
<text x="67" y="482" font-size="12" fill="#000" text-anchor="end" >6,29</text>
<text x="67" y="516" font-size="12" fill="#000" text-anchor="end" >0</text>
<text x="67" y="565" font-size="12" fill="#000" text-anchor="end" >-6,39</text>
<text x="897.5" y="477.5" font-size="12" fill="#000" text-anchor="start" >Macd</text>
<text x="897.5" y="488.7" font-size="12" fill="#000" text-anchor="start" >Forest</text>
<text x="897.5" y="500" font-size="12" fill="#000" text-anchor="start" clip-path="url(#cpR)">26,12,26</text>
<text x="899.5" y="559.5" font-size="12" fill="#1c1cff" text-anchor="start" >-5,81</text>
<g shape-rendering="crispEdges">
<rect x="20.5" y="570.5" width="923" height="99" fill="none" stroke="#000" stroke-width="1"/>
<rect x="70.5" y="572.5" width="823" height="95" fill="none" stroke="#a0a0a0" stroke-width="1"/>
<line x1="98.5" y1="576" x2="98.5" y2="667" stroke="#8e8e8e" stroke-width="1" stroke-dasharray="3 3"/>
<line x1="141.5" y1="576" x2="141.5" y2="667" stroke="#8e8e8e" stroke-width="1" stroke-dasharray="3 3"/>
<line x1="183.5" y1="576" x2="183.5" y2="667" stroke="#8e8e8e" stroke-width="1" stroke-dasharray="3 3"/>
<line x1="226.5" y1="576" x2="226.5" y2="667" stroke="#8e8e8e" stroke-width="1" stroke-dasharray="3 3"/>
<line x1="268.5" y1="576" x2="268.5" y2="667" stroke="#8e8e8e" stroke-width="1" stroke-dasharray="3 3"/>
<line x1="283.5" y1="576" x2="283.5" y2="667" stroke="#8e8e8e" stroke-width="1" stroke-dasharray="3 3"/>
<line x1="325.5" y1="576" x2="325.5" y2="667" stroke="#8e8e8e" stroke-width="1" stroke-dasharray="3 3"/>
<line x1="368.5" y1="576" x2="368.5" y2="667" stroke="#8e8e8e" stroke-width="1" stroke-dasharray="3 3"/>
<line x1="410.5" y1="576" x2="410.5" y2="667" stroke="#8e8e8e" stroke-width="1" stroke-dasharray="3 3"/>
<line x1="453.5" y1="576" x2="453.5" y2="667" stroke="#8e8e8e" stroke-width="1" stroke-dasharray="3 3"/>
<line x1="496.5" y1="576" x2="496.5" y2="667" stroke="#8e8e8e" stroke-width="1" stroke-dasharray="3 3"/>
<line x1="538.5" y1="576" x2="538.5" y2="667" stroke="#8e8e8e" stroke-width="1" stroke-dasharray="3 3"/>
<line x1="581.5" y1="576" x2="581.5" y2="667" stroke="#8e8e8e" stroke-width="1" stroke-dasharray="3 3"/>
<line x1="595.5" y1="576" x2="595.5" y2="667" stroke="#8e8e8e" stroke-width="1" stroke-dasharray="3 3"/>
<line x1="638.5" y1="576" x2="638.5" y2="667" stroke="#8e8e8e" stroke-width="1" stroke-dasharray="3 3"/>
<line x1="680.5" y1="576" x2="680.5" y2="667" stroke="#8e8e8e" stroke-width="1" stroke-dasharray="3 3"/>
<line x1="723.5" y1="576" x2="723.5" y2="667" stroke="#8e8e8e" stroke-width="1" stroke-dasharray="3 3"/>
<line x1="766.5" y1="576" x2="766.5" y2="667" stroke="#8e8e8e" stroke-width="1" stroke-dasharray="3 3"/>
<line x1="808.5" y1="576" x2="808.5" y2="667" stroke="#8e8e8e" stroke-width="1" stroke-dasharray="3 3"/>
<line x1="822.5" y1="576" x2="822.5" y2="667" stroke="#8e8e8e" stroke-width="1" stroke-dasharray="3 3"/>
<line x1="865.5" y1="576" x2="865.5" y2="667" stroke="#8e8e8e" stroke-width="1" stroke-dasharray="3 3"/>
</g>
<text x="80" y="585" font-size="12" fill="#c4c4c4" text-anchor="start"  textLength="107" lengthAdjust="spacingAndGlyphs">Indice Calidad Vela</text>
<g shape-rendering="crispEdges">
<rect x="78.5" y="610.5" width="11" height="9" fill="#2f6bf6" stroke="#0c0c0c" stroke-width="1"/>
<rect x="92.5" y="620.5" width="11" height="3" fill="#f0207c" stroke="#0c0c0c" stroke-width="1"/>
<rect x="106.5" y="620.5" width="11" height="18" fill="#f0207c" stroke="#0c0c0c" stroke-width="1"/>
<rect x="120.5" y="620.5" width="11" height="27" fill="#f0207c" stroke="#0c0c0c" stroke-width="1"/>
<rect x="135.5" y="615.5" width="11" height="4" fill="#2f6bf6" stroke="#0c0c0c" stroke-width="1"/>
<rect x="149.5" y="615.5" width="11" height="4" fill="#2f6bf6" stroke="#0c0c0c" stroke-width="1"/>
<rect x="163.5" y="620.5" width="11" height="3" fill="#f0207c" stroke="#0c0c0c" stroke-width="1"/>
<rect x="177.5" y="600.5" width="11" height="19" fill="#2f6bf6" stroke="#0c0c0c" stroke-width="1"/>
<rect x="191.5" y="620.5" width="11" height="23" fill="#f0207c" stroke="#0c0c0c" stroke-width="1"/>
<rect x="206.5" y="620.5" width="11" height="23" fill="#f0207c" stroke="#0c0c0c" stroke-width="1"/>
<rect x="220.5" y="620.5" width="11" height="3" fill="#f0207c" stroke="#0c0c0c" stroke-width="1"/>
<rect x="234.5" y="620.5" width="11" height="3" fill="#f0207c" stroke="#0c0c0c" stroke-width="1"/>
<rect x="248.5" y="596.5" width="11" height="23" fill="#2f6bf6" stroke="#0c0c0c" stroke-width="1"/>
<rect x="262.5" y="620.5" width="11" height="3" fill="#f0207c" stroke="#0c0c0c" stroke-width="1"/>
<rect x="277.5" y="615.5" width="11" height="4" fill="#2f6bf6" stroke="#0c0c0c" stroke-width="1"/>
<rect x="291.5" y="615.5" width="11" height="4" fill="#2f6bf6" stroke="#0c0c0c" stroke-width="1"/>
<rect x="305.5" y="615.5" width="11" height="4" fill="#2f6bf6" stroke="#0c0c0c" stroke-width="1"/>
<rect x="319.5" y="600.5" width="11" height="19" fill="#2f6bf6" stroke="#0c0c0c" stroke-width="1"/>
<rect x="333.5" y="605.5" width="11" height="14" fill="#2f6bf6" stroke="#0c0c0c" stroke-width="1"/>
<rect x="348.5" y="605.5" width="11" height="14" fill="#2f6bf6" stroke="#0c0c0c" stroke-width="1"/>
<rect x="362.5" y="620.5" width="11" height="3" fill="#f0207c" stroke="#0c0c0c" stroke-width="1"/>
<rect x="376.5" y="610.5" width="11" height="9" fill="#2f6bf6" stroke="#0c0c0c" stroke-width="1"/>
<rect x="390.5" y="620.5" width="11" height="23" fill="#f0207c" stroke="#0c0c0c" stroke-width="1"/>
<rect x="404.5" y="620.5" width="11" height="23" fill="#f0207c" stroke="#0c0c0c" stroke-width="1"/>
<rect x="419.5" y="620.5" width="11" height="18" fill="#f0207c" stroke="#0c0c0c" stroke-width="1"/>
<rect x="433.5" y="600.5" width="11" height="19" fill="#2f6bf6" stroke="#0c0c0c" stroke-width="1"/>
<rect x="447.5" y="620.5" width="11" height="27" fill="#f0207c" stroke="#0c0c0c" stroke-width="1"/>
<rect x="461.5" y="620.5" width="11" height="8" fill="#f0207c" stroke="#0c0c0c" stroke-width="1"/>
<rect x="476.5" y="586.5" width="11" height="33" fill="#2f6bf6" stroke="#0c0c0c" stroke-width="1"/>
<rect x="490.5" y="600.5" width="11" height="19" fill="#2f6bf6" stroke="#0c0c0c" stroke-width="1"/>
<rect x="504.5" y="620.5" width="11" height="8" fill="#f0207c" stroke="#0c0c0c" stroke-width="1"/>
<rect x="518.5" y="605.5" width="11" height="14" fill="#2f6bf6" stroke="#0c0c0c" stroke-width="1"/>
<rect x="532.5" y="610.5" width="11" height="9" fill="#2f6bf6" stroke="#0c0c0c" stroke-width="1"/>
<rect x="547.5" y="620.5" width="11" height="8" fill="#f0207c" stroke="#0c0c0c" stroke-width="1"/>
<rect x="561.5" y="615.5" width="11" height="4" fill="#2f6bf6" stroke="#0c0c0c" stroke-width="1"/>
<rect x="575.5" y="620.5" width="11" height="13" fill="#f0207c" stroke="#0c0c0c" stroke-width="1"/>
<rect x="589.5" y="615.5" width="11" height="4" fill="#2f6bf6" stroke="#0c0c0c" stroke-width="1"/>
<rect x="603.5" y="620.5" width="11" height="3" fill="#f0207c" stroke="#0c0c0c" stroke-width="1"/>
<rect x="618.5" y="620.5" width="11" height="8" fill="#f0207c" stroke="#0c0c0c" stroke-width="1"/>
<rect x="632.5" y="615.5" width="11" height="4" fill="#2f6bf6" stroke="#0c0c0c" stroke-width="1"/>
<rect x="646.5" y="620.5" width="11" height="13" fill="#f0207c" stroke="#0c0c0c" stroke-width="1"/>
<rect x="660.5" y="591.5" width="11" height="28" fill="#2f6bf6" stroke="#0c0c0c" stroke-width="1"/>
<rect x="674.5" y="596.5" width="11" height="23" fill="#2f6bf6" stroke="#0c0c0c" stroke-width="1"/>
<rect x="689.5" y="615.5" width="11" height="4" fill="#2f6bf6" stroke="#0c0c0c" stroke-width="1"/>
<rect x="703.5" y="620.5" width="11" height="18" fill="#f0207c" stroke="#0c0c0c" stroke-width="1"/>
<rect x="717.5" y="620.5" width="11" height="13" fill="#f0207c" stroke="#0c0c0c" stroke-width="1"/>
<rect x="731.5" y="620.5" width="11" height="3" fill="#f0207c" stroke="#0c0c0c" stroke-width="1"/>
<rect x="745.5" y="620.5" width="11" height="27" fill="#f0207c" stroke="#0c0c0c" stroke-width="1"/>
<rect x="760.5" y="620.5" width="11" height="27" fill="#f0207c" stroke="#0c0c0c" stroke-width="1"/>
<rect x="774.5" y="620.5" width="11" height="3" fill="#f0207c" stroke="#0c0c0c" stroke-width="1"/>
<rect x="788.5" y="620.5" width="11" height="18" fill="#f0207c" stroke="#0c0c0c" stroke-width="1"/>
<rect x="802.5" y="620.5" width="11" height="8" fill="#f0207c" stroke="#0c0c0c" stroke-width="1"/>
<rect x="816.5" y="620.5" width="11" height="18" fill="#f0207c" stroke="#0c0c0c" stroke-width="1"/>
<rect x="831.5" y="620.5" width="11" height="23" fill="#f0207c" stroke="#0c0c0c" stroke-width="1"/>
<rect x="845.5" y="620.5" width="11" height="27" fill="#f0207c" stroke="#0c0c0c" stroke-width="1"/>
<rect x="859.5" y="620.5" width="11" height="32" fill="#f0207c" stroke="#0c0c0c" stroke-width="1"/>
<rect x="873.5" y="600.5" width="11" height="19" fill="#2f6bf6" stroke="#0c0c0c" stroke-width="1"/>
<line x1="70" y1="620.5" x2="895" y2="620.5" stroke="#000" stroke-width="1"/>
</g>
<line x1="70.50" y1="631.25" x2="84.50" y2="626.75" stroke="#f00c0c" stroke-width="2" stroke-linecap="round"/>
<line x1="84.50" y1="626.75" x2="98.50" y2="615.50" stroke="#2c9a0c" stroke-width="2" stroke-linecap="round"/>
<line x1="98.50" y1="615.50" x2="112.50" y2="626.25" stroke="#f00c0c" stroke-width="2" stroke-linecap="round"/>
<line x1="112.50" y1="626.25" x2="126.50" y2="632.00" stroke="#f00c0c" stroke-width="2" stroke-linecap="round"/>
<line x1="126.50" y1="632.00" x2="141.50" y2="629.50" stroke="#f00c0c" stroke-width="2" stroke-linecap="round"/>
<line x1="141.50" y1="629.50" x2="155.50" y2="627.50" stroke="#f00c0c" stroke-width="2" stroke-linecap="round"/>
<line x1="155.50" y1="627.50" x2="169.50" y2="615.75" stroke="#2c9a0c" stroke-width="2" stroke-linecap="round"/>
<line x1="169.50" y1="615.75" x2="183.50" y2="615.75" stroke="#2c9a0c" stroke-width="2" stroke-linecap="round"/>
<line x1="183.50" y1="615.75" x2="197.50" y2="615.75" stroke="#2c9a0c" stroke-width="2" stroke-linecap="round"/>
<line x1="197.50" y1="615.75" x2="212.50" y2="628.00" stroke="#f00c0c" stroke-width="2" stroke-linecap="round"/>
<line x1="212.50" y1="628.00" x2="226.50" y2="628.75" stroke="#f00c0c" stroke-width="2" stroke-linecap="round"/>
<line x1="226.50" y1="628.75" x2="240.50" y2="628.75" stroke="#f00c0c" stroke-width="2" stroke-linecap="round"/>
<line x1="240.50" y1="628.75" x2="254.50" y2="616.25" stroke="#2c9a0c" stroke-width="2" stroke-linecap="round"/>
<line x1="254.50" y1="616.25" x2="268.50" y2="616.25" stroke="#2c9a0c" stroke-width="2" stroke-linecap="round"/>
<line x1="268.50" y1="616.25" x2="283.50" y2="616.25" stroke="#2c9a0c" stroke-width="2" stroke-linecap="round"/>
<line x1="283.50" y1="616.25" x2="297.50" y2="616.25" stroke="#2c9a0c" stroke-width="2" stroke-linecap="round"/>
<line x1="297.50" y1="616.25" x2="311.50" y2="616.25" stroke="#2c9a0c" stroke-width="2" stroke-linecap="round"/>
<line x1="311.50" y1="616.25" x2="325.50" y2="616.25" stroke="#2c9a0c" stroke-width="2" stroke-linecap="round"/>
<line x1="325.50" y1="616.25" x2="339.50" y2="612.00" stroke="#2c9a0c" stroke-width="2" stroke-linecap="round"/>
<line x1="339.50" y1="612.00" x2="354.50" y2="610.75" stroke="#2c9a0c" stroke-width="2" stroke-linecap="round"/>
<line x1="354.50" y1="610.75" x2="368.50" y2="611.75" stroke="#2c9a0c" stroke-width="2" stroke-linecap="round"/>
<line x1="368.50" y1="611.75" x2="382.50" y2="613.00" stroke="#2c9a0c" stroke-width="2" stroke-linecap="round"/>
<line x1="382.50" y1="613.00" x2="396.50" y2="616.25" stroke="#2c9a0c" stroke-width="2" stroke-linecap="round"/>
<line x1="396.50" y1="616.25" x2="410.50" y2="616.25" stroke="#2c9a0c" stroke-width="2" stroke-linecap="round"/>
<line x1="410.50" y1="616.25" x2="425.50" y2="628.75" stroke="#f00c0c" stroke-width="2" stroke-linecap="round"/>
<line x1="425.50" y1="628.75" x2="439.50" y2="616.25" stroke="#2c9a0c" stroke-width="2" stroke-linecap="round"/>
<line x1="439.50" y1="616.25" x2="453.50" y2="628.75" stroke="#f00c0c" stroke-width="2" stroke-linecap="round"/>
<line x1="453.50" y1="628.75" x2="467.50" y2="630.00" stroke="#f00c0c" stroke-width="2" stroke-linecap="round"/>
<line x1="467.50" y1="630.00" x2="482.50" y2="616.25" stroke="#2c9a0c" stroke-width="2" stroke-linecap="round"/>
<line x1="482.50" y1="616.25" x2="496.50" y2="616.25" stroke="#2c9a0c" stroke-width="2" stroke-linecap="round"/>
<line x1="496.50" y1="616.25" x2="510.50" y2="616.25" stroke="#2c9a0c" stroke-width="2" stroke-linecap="round"/>
<line x1="510.50" y1="616.25" x2="524.50" y2="616.25" stroke="#2c9a0c" stroke-width="2" stroke-linecap="round"/>
<line x1="524.50" y1="616.25" x2="538.50" y2="614.25" stroke="#2c9a0c" stroke-width="2" stroke-linecap="round"/>
<line x1="538.50" y1="614.25" x2="553.50" y2="616.25" stroke="#2c9a0c" stroke-width="2" stroke-linecap="round"/>
<line x1="553.50" y1="616.25" x2="567.50" y2="616.25" stroke="#2c9a0c" stroke-width="2" stroke-linecap="round"/>
<line x1="567.50" y1="616.25" x2="581.50" y2="616.25" stroke="#2c9a0c" stroke-width="2" stroke-linecap="round"/>
<line x1="581.50" y1="616.25" x2="595.50" y2="616.25" stroke="#2c9a0c" stroke-width="2" stroke-linecap="round"/>
<line x1="595.50" y1="616.25" x2="609.50" y2="616.25" stroke="#2c9a0c" stroke-width="2" stroke-linecap="round"/>
<line x1="609.50" y1="616.25" x2="624.50" y2="616.25" stroke="#2c9a0c" stroke-width="2" stroke-linecap="round"/>
<line x1="624.50" y1="616.25" x2="638.50" y2="616.25" stroke="#2c9a0c" stroke-width="2" stroke-linecap="round"/>
<line x1="638.50" y1="616.25" x2="652.50" y2="616.25" stroke="#2c9a0c" stroke-width="2" stroke-linecap="round"/>
<line x1="652.50" y1="616.25" x2="666.50" y2="616.25" stroke="#2c9a0c" stroke-width="2" stroke-linecap="round"/>
<line x1="666.50" y1="616.25" x2="680.50" y2="613.25" stroke="#2c9a0c" stroke-width="2" stroke-linecap="round"/>
<line x1="680.50" y1="613.25" x2="695.50" y2="612.50" stroke="#2c9a0c" stroke-width="2" stroke-linecap="round"/>
<line x1="695.50" y1="612.50" x2="709.50" y2="616.00" stroke="#2c9a0c" stroke-width="2" stroke-linecap="round"/>
<line x1="709.50" y1="616.00" x2="723.50" y2="615.50" stroke="#2c9a0c" stroke-width="2" stroke-linecap="round"/>
<line x1="723.50" y1="615.50" x2="737.50" y2="615.50" stroke="#2c9a0c" stroke-width="2" stroke-linecap="round"/>
<line x1="737.50" y1="615.50" x2="751.50" y2="627.50" stroke="#f00c0c" stroke-width="2" stroke-linecap="round"/>
<line x1="751.50" y1="627.50" x2="766.50" y2="632.50" stroke="#f00c0c" stroke-width="2" stroke-linecap="round"/>
<line x1="766.50" y1="632.50" x2="780.50" y2="633.75" stroke="#f00c0c" stroke-width="2" stroke-linecap="round"/>
<line x1="780.50" y1="633.75" x2="794.50" y2="635.00" stroke="#f00c0c" stroke-width="2" stroke-linecap="round"/>
<line x1="794.50" y1="635.00" x2="808.50" y2="633.50" stroke="#f00c0c" stroke-width="2" stroke-linecap="round"/>
<line x1="808.50" y1="633.50" x2="822.50" y2="635.00" stroke="#f00c0c" stroke-width="2" stroke-linecap="round"/>
<line x1="822.50" y1="635.00" x2="837.50" y2="637.50" stroke="#f00c0c" stroke-width="2" stroke-linecap="round"/>
<line x1="837.50" y1="637.50" x2="851.50" y2="640.00" stroke="#f00c0c" stroke-width="2" stroke-linecap="round"/>
<line x1="851.50" y1="640.00" x2="865.50" y2="642.50" stroke="#f00c0c" stroke-width="2" stroke-linecap="round"/>
<line x1="865.50" y1="642.50" x2="879.50" y2="637.00" stroke="#f00c0c" stroke-width="2" stroke-linecap="round"/>
<text x="67" y="585" font-size="12" fill="#000" text-anchor="end" >10</text>
<text x="67" y="620" font-size="12" fill="#000" text-anchor="end" >0</text>
<text x="67" y="668" font-size="12" fill="#000" text-anchor="end" >-10</text>
<text x="897.5" y="580.7" font-size="12" fill="#000" text-anchor="start"  textLength="18" lengthAdjust="spacingAndGlyphs">ICV</text>
<text x="897.5" y="591.7" font-size="12" fill="#000" text-anchor="start" >5, 3, 1</text>
<text x="899.5" y="635.7" font-size="12" fill="#1c1cff" text-anchor="start"  textLength="30.5" lengthAdjust="spacingAndGlyphs">-3,46</text>
<g shape-rendering="crispEdges">
<rect x="20.5" y="673.5" width="923" height="99" fill="none" stroke="#000" stroke-width="1"/>
<rect x="70.5" y="675.5" width="823" height="95" fill="none" stroke="#a0a0a0" stroke-width="1"/>
<line x1="98.5" y1="679" x2="98.5" y2="770" stroke="#8e8e8e" stroke-width="1" stroke-dasharray="3 3"/>
<line x1="141.5" y1="679" x2="141.5" y2="770" stroke="#8e8e8e" stroke-width="1" stroke-dasharray="3 3"/>
<line x1="183.5" y1="679" x2="183.5" y2="770" stroke="#8e8e8e" stroke-width="1" stroke-dasharray="3 3"/>
<line x1="226.5" y1="679" x2="226.5" y2="770" stroke="#8e8e8e" stroke-width="1" stroke-dasharray="3 3"/>
<line x1="268.5" y1="679" x2="268.5" y2="770" stroke="#8e8e8e" stroke-width="1" stroke-dasharray="3 3"/>
<line x1="283.5" y1="679" x2="283.5" y2="770" stroke="#8e8e8e" stroke-width="1" stroke-dasharray="3 3"/>
<line x1="325.5" y1="679" x2="325.5" y2="770" stroke="#8e8e8e" stroke-width="1" stroke-dasharray="3 3"/>
<line x1="368.5" y1="679" x2="368.5" y2="770" stroke="#8e8e8e" stroke-width="1" stroke-dasharray="3 3"/>
<line x1="410.5" y1="679" x2="410.5" y2="770" stroke="#8e8e8e" stroke-width="1" stroke-dasharray="3 3"/>
<line x1="453.5" y1="679" x2="453.5" y2="770" stroke="#8e8e8e" stroke-width="1" stroke-dasharray="3 3"/>
<line x1="496.5" y1="679" x2="496.5" y2="770" stroke="#8e8e8e" stroke-width="1" stroke-dasharray="3 3"/>
<line x1="538.5" y1="679" x2="538.5" y2="770" stroke="#8e8e8e" stroke-width="1" stroke-dasharray="3 3"/>
<line x1="581.5" y1="679" x2="581.5" y2="770" stroke="#8e8e8e" stroke-width="1" stroke-dasharray="3 3"/>
<line x1="595.5" y1="679" x2="595.5" y2="770" stroke="#8e8e8e" stroke-width="1" stroke-dasharray="3 3"/>
<line x1="638.5" y1="679" x2="638.5" y2="770" stroke="#8e8e8e" stroke-width="1" stroke-dasharray="3 3"/>
<line x1="680.5" y1="679" x2="680.5" y2="770" stroke="#8e8e8e" stroke-width="1" stroke-dasharray="3 3"/>
<line x1="723.5" y1="679" x2="723.5" y2="770" stroke="#8e8e8e" stroke-width="1" stroke-dasharray="3 3"/>
<line x1="766.5" y1="679" x2="766.5" y2="770" stroke="#8e8e8e" stroke-width="1" stroke-dasharray="3 3"/>
<line x1="808.5" y1="679" x2="808.5" y2="770" stroke="#8e8e8e" stroke-width="1" stroke-dasharray="3 3"/>
<line x1="822.5" y1="679" x2="822.5" y2="770" stroke="#8e8e8e" stroke-width="1" stroke-dasharray="3 3"/>
<line x1="865.5" y1="679" x2="865.5" y2="770" stroke="#8e8e8e" stroke-width="1" stroke-dasharray="3 3"/>
</g>
<text x="80" y="687.5" font-size="12" fill="#c4c4c4" text-anchor="start"  textLength="88" lengthAdjust="spacingAndGlyphs">Full Estocastico</text>
<g shape-rendering="crispEdges">
<line x1="71" y1="713.5" x2="895" y2="713.5" stroke="#f00000" stroke-width="1" stroke-dasharray="3 3"/>
<line x1="71" y1="732.5" x2="895" y2="732.5" stroke="#0c7a0c" stroke-width="1" stroke-dasharray="3 3"/>
</g>
<polyline points="70.50,765.00 255.00,765.00 283.50,763.00 311.50,760.00 339.50,756.25 368.50,750.00 396.50,744.25 410.50,742.00 425.00,742.50 439.50,744.50 453.50,748.00 467.50,752.50 475.00,755.50 496.50,760.50 510.50,760.75 524.50,758.75 538.50,755.00 553.00,749.25 567.50,745.00 581.50,741.25 595.50,739.50 624.00,739.00 652.50,740.00 666.50,740.00 680.60,739.60 695.40,738.60 709.60,736.00 723.60,734.00 738.00,733.00 752.00,733.00 766.40,735.00 781.00,740.00 795.00,746.00 808.60,752.00 822.40,757.00 836.00,760.00 851.00,763.25 865.50,765.00 880.50,765.75" fill="none" stroke="#c2c2c2" stroke-width="2" stroke-dasharray="6 3"/>
<polyline points="70.50,765.75 98.50,763.75 125.00,765.50 150.00,767.00 183.50,763.00 212.50,763.75 240.50,766.75 255.00,764.50 268.50,762.00 283.50,759.00 297.50,756.75 311.50,755.50 325.50,753.50 339.50,749.50 353.50,746.00 368.50,742.00 382.50,737.75 396.50,736.75 410.50,741.50 425.00,750.00 439.50,758.25 453.50,764.50 467.50,765.75 482.50,764.50 496.50,760.00 510.50,752.50 524.50,744.25 538.50,739.25 553.00,737.75 567.50,738.00 581.50,738.75 595.50,739.00 610.00,739.50 624.00,740.00 638.50,740.75 652.50,741.00 666.50,741.00 680.50,738.00" fill="none" stroke="#f00c0c" stroke-width="2" stroke-linejoin="round"/>
<polyline points="723.50,728.00 738.00,735.60 752.00,743.00 766.50,749.60 781.00,758.00 795.00,763.00 808.50,765.00 822.50,764.00 836.00,765.00 851.00,767.00 865.50,767.50 880.50,767.50" fill="none" stroke="#f00c0c" stroke-width="2" stroke-linejoin="round"/>
<polyline points="680.50,738.00 695.50,730.60 709.50,725.60 723.50,728.00" fill="none" stroke="#28108c" stroke-width="2" stroke-linejoin="round"/>
<text x="67" y="687.5" font-size="12" fill="#000" text-anchor="end" >100</text>
<text x="67" y="713" font-size="12" fill="#000" text-anchor="end" >60</text>
<text x="67" y="732" font-size="12" fill="#000" text-anchor="end" >40</text>
<text x="67" y="770.5" font-size="12" fill="#000" text-anchor="end" >0</text>
<text x="897.5" y="683.7" font-size="12" fill="#000" text-anchor="start"  textLength="38.7" lengthAdjust="spacingAndGlyphs">EST. %</text>
<text x="897.5" y="694.6" font-size="12" fill="#000" text-anchor="start"  textLength="25" lengthAdjust="spacingAndGlyphs">FULL</text>
<text x="897.5" y="705.7" font-size="12" fill="#000" text-anchor="start"  textLength="43.2" lengthAdjust="spacingAndGlyphs">(28,3,6)</text>
<text x="899.5" y="767" font-size="12" fill="#1c1cff" text-anchor="start" >3,83</text>
<text x="20.5" y="790" font-size="13" fill="#000" text-anchor="start"  textLength="97" lengthAdjust="spacingAndGlyphs">ORACLE (ORCL)</text>
<text x="306" y="790" font-size="13" fill="#1c1cff" text-anchor="start" stroke="#1c1cff" stroke-width="0.3" textLength="575.5" lengthAdjust="spacingAndGlyphs">/Users/mserra/Library/CloudStorage/Dropbox/WorkDB/DatosBolsa/Configs/Config.DEFAULT.xml</text>
<rect x="919.5" y="777.5" width="65" height="16" fill="#f00000" stroke="#d8d8d8" stroke-width="1" shape-rendering="crispEdges"/>
<text x="923" y="790" font-size="12" fill="#fff" text-anchor="start"  textLength="22" lengthAdjust="spacingAndGlyphs">OFF</text>
<rect x="18.7" y="12" width="135.60000000000002" height="20" rx="5.5" fill="#000" opacity="0.06"/>
<rect x="19.2" y="11.3" width="134.60000000000002" height="19.6" rx="5.5" fill="#fff" stroke="#d2d2d2" stroke-width="1"/>
<text x="27" y="25" font-size="13" fill="#000" text-anchor="start" stroke="#000" stroke-width="0.3" textLength="78" lengthAdjust="spacingAndGlyphs">CandleSticks</text>
<path d="M140.3 19.3 l3 -3 l3 3 M140.3 23 l3 3 l3 -3" fill="none" stroke="#2a2a2a" stroke-width="1.4" stroke-linecap="round" stroke-linejoin="round"/>
<rect x="194.5" y="12" width="98.80000000000001" height="20" rx="5.5" fill="#000" opacity="0.06"/>
<rect x="195.0" y="11.3" width="97.80000000000001" height="19.6" rx="5.5" fill="#fff" stroke="#d2d2d2" stroke-width="1"/>
<text x="203.3" y="25" font-size="13" fill="#000" text-anchor="start" stroke="#000" stroke-width="0.3">3 mesos</text>
<path d="M279.3 19.3 l3 -3 l3 3 M279.3 23 l3 3 l3 -3" fill="none" stroke="#2a2a2a" stroke-width="1.4" stroke-linecap="round" stroke-linejoin="round"/>
<rect x="303.7" y="12" width="91.30000000000001" height="20" rx="5.5" fill="#000" opacity="0.06"/>
<rect x="304.2" y="11.3" width="90.30000000000001" height="19.6" rx="5.5" fill="#fff" stroke="#d2d2d2" stroke-width="1"/>
<text x="312" y="25" font-size="13" fill="#000" text-anchor="start" stroke="#000" stroke-width="0.3">dia</text>
<path d="M381 19.3 l3 -3 l3 3 M381 23 l3 3 l3 -3" fill="none" stroke="#2a2a2a" stroke-width="1.4" stroke-linecap="round" stroke-linejoin="round"/>
<circle cx="174.3" cy="21.3" r="11.3" fill="url(#help)" stroke="#9aa0e8" stroke-width="1.4"/>
<text x="174.3" y="28" font-size="19" fill="#fff" text-anchor="middle" font-weight="bold">?</text>
<g shape-rendering="crispEdges">
<rect x="405" y="12" width="18" height="5" fill="#111"/>
<rect x="408" y="14" width="12" height="1" fill="#2fd02f"/>
<rect x="405.5" y="18.5" width="17" height="10" fill="#fff" stroke="#222" stroke-width="1"/>
<rect x="404" y="30" width="20" height="1" fill="#9a9a9a"/>
</g>
<polyline points="408,25.5 411,23 413.5,25 419,20.5" fill="none" stroke="#2030ff" stroke-width="1.2"/>
<rect x="436.0" y="15.5" width="13" height="13" rx="3" fill="#fff" stroke="#bdbdbd" stroke-width="1"/>
<path d="M439.1 22.3 l2.7 3 l4.6 -6.6" fill="none" stroke="#111" stroke-width="1.7" stroke-linecap="round" stroke-linejoin="round"/>
<text x="455.5" y="26.3" font-size="13" fill="#000" text-anchor="start" stroke="#000" stroke-width="0.3">Guies</text>
<rect x="505.5" y="15.5" width="13" height="13" rx="3" fill="#fff" stroke="#bdbdbd" stroke-width="1"/>
<text x="525.7" y="26.3" font-size="13" fill="#000" text-anchor="start" stroke="#000" stroke-width="0.3">Cursor</text>
<path d="M586.3 10 L607.7 10 L603.8 31 Q597 35.5 590.2 31 Z" fill="url(#trash)"/>
<ellipse cx="597" cy="27.5" rx="4.5" ry="4" fill="#b0b0b0" opacity="0.45"/>
<ellipse cx="597" cy="10" rx="10.8" ry="3" fill="#2c2c2c"/>
<ellipse cx="597" cy="10.3" rx="8.6" ry="1.8" fill="#4c4c4c"/>
<path d="M590 14 L592 31 M594.5 14 L595.5 32.5 M599.5 14 L598.5 32.5 M604 14 L602 31 M588 18 H606 M588.6 23 H605.4 M589.4 28 H604.6" stroke="#5a5a5a" stroke-width="0.6" fill="none" opacity="0.8"/>
<rect x="623.5" y="7.5" width="19.5" height="26" rx="1" fill="url(#pageg)" stroke="#86aaf0" stroke-width="1"/>
<path d="M627.9 8.2 Q629 11 630 12.5 Q631 15 632.5 17 Q634.5 14 637.4 12.5 Q640 10.8 642.3 10.4 Q644.5 10.6 645.1 12.5 Q645.5 14.5 644.7 15.6 Q642.5 16.6 640.9 18.1 Q638.8 20 637.4 22.3 Q639.2 24.4 641.6 25.8 Q643.8 27 645.8 27.9 Q645 30.2 643 31.4 Q640.5 31.2 638.1 30 Q635.4 28.2 633.2 25.8 Q631 28.4 629 30.7 Q627.4 32.4 625.5 33.5 Q622 32.2 619.9 29.3 Q622.2 28.2 624.1 26.5 Q626.4 24.6 628.3 22.3 Q626.6 20 625.5 17.4 Q624.6 15 624.4 12.5 Q624.6 10.8 625.5 9.7 Q626.6 8.8 627.9 8.2 Z" fill="url(#xred)" stroke="#7e0000" stroke-width="0.9" stroke-linejoin="round"/>
<rect x="656.4" y="15.3" width="22.3" height="17.2" rx="1.6" fill="url(#camg)" stroke="#4e4e4e" stroke-width="1"/>
<rect x="657" y="18.6" width="6.6" height="13.2" fill="#7a7a7a"/>
<rect x="657.5" y="14.2" width="4.5" height="1.6" rx="0.8" fill="#3a3a3a"/>
<circle cx="671" cy="26.6" r="4.9" fill="#f2f2f2" stroke="#5a5a5a" stroke-width="1"/>
<circle cx="671" cy="26.8" r="3" fill="#7c8a4c"/>
<circle cx="671" cy="27.4" r="1.7" fill="#2e3a1e"/>
<circle cx="672.7" cy="17" r="8.8" fill="#fffff0" fill-opacity="0.72" stroke="#e6e6b0" stroke-width="1.4" stroke-opacity="0.85"/>
<rect x="669" y="16.3" width="6.8" height="3.2" rx="1.2" fill="#fff" stroke="#9a9a9a" stroke-width="0.7"/>
<rect x="694.5" y="11.5" width="20" height="20" fill="#3a46c0" stroke="#20288a" stroke-width="1"/>
<rect x="698" y="12" width="13" height="10" fill="#bcd4f6"/>
<rect x="699" y="25" width="10" height="6.5" fill="#c8c8c8"/>
<rect x="700" y="26" width="3" height="5" fill="#3a46c0"/>
<rect x="711.5" y="12.5" width="2" height="2" fill="#fff"/>
<path d="M729 28.5 L729 15.5 Q729 14 730.5 14 L736 14 L738 16.5 L745.5 16.5 L745.5 19.5" fill="#fbeedd" stroke="#c89664" stroke-width="1.1"/>
<path d="M729 28.5 L733.5 19.5 L750 19.5 L745.5 28.5 Z" fill="#fdf3e4" stroke="#c89664" stroke-width="1.1" stroke-linejoin="round"/>
<path d="M766 19.1 A8.8 7.8 0 0 1 781.4 14.6" fill="none" stroke="#3a9628" stroke-width="5.6"/>
<path d="M766 19.1 A8.8 7.8 0 0 1 781.4 14.6" fill="none" stroke="#72cf52" stroke-width="4.2"/>
<polygon points="778.4,17.4 785.4,10.4 786.6,19" fill="#72cf52" stroke="#3a9628" stroke-width="0.8" stroke-linejoin="round"/>
<path d="M783.6 20.5 A8.8 7.8 0 0 1 768.2 25" fill="none" stroke="#3a9628" stroke-width="5.6"/>
<path d="M783.6 20.5 A8.8 7.8 0 0 1 768.2 25" fill="none" stroke="#5cbc3e" stroke-width="4.2"/>
<polygon points="771.2,22.2 764.2,29.2 763,20.6" fill="#5cbc3e" stroke="#3a9628" stroke-width="0.8" stroke-linejoin="round"/>
<ellipse cx="808.5" cy="31.2" rx="12.5" ry="1.5" fill="#000" opacity="0.8"/>
<circle cx="811.5" cy="20.2" r="10.5" fill="url(#gball)"/>
<path d="M817.2 12.2 Q808 6.5 804.2 13.5 Q802.4 19.6 811.6 20.4 Q819.4 21.8 816.6 27.6 Q812.6 32.6 806.4 29.6" fill="none" stroke="#eceae4" stroke-width="4.6" stroke-linecap="round"/>
<polygon points="808.8,33.6 803.6,27.2 809.6,26.6" fill="#eceae4"/>
<g transform="rotate(-16 844 20)">
<text x="843.2" y="32.6" font-size="33" fill="#4e4646" text-anchor="middle" font-weight="bold" textLength="24" lengthAdjust="spacingAndGlyphs">€</text>
<text x="844.2" y="31" font-size="33" fill="url(#silver)" text-anchor="middle" font-weight="bold" stroke="#8a8484" stroke-width="0.5" textLength="24" lengthAdjust="spacingAndGlyphs">€</text>
</g>
<polygon points="893.10,17.63 893.10,22.37 889.33,23.10 888.59,24.90 890.73,28.08 887.38,31.43 884.20,29.29 882.40,30.03 881.67,33.80 876.93,33.80 876.20,30.03 874.40,29.29 871.22,31.43 867.87,28.08 870.01,24.90 869.27,23.10 865.50,22.37 865.50,17.63 869.27,16.90 870.01,15.10 867.87,11.92 871.22,8.57 874.40,10.71 876.20,9.97 876.93,6.20 881.67,6.20 882.40,9.97 884.20,10.71 887.38,8.57 890.73,11.92 888.59,15.10 889.33,16.90" fill="url(#gearg)" stroke="#5e5e5e" stroke-width="0.9" stroke-linejoin="round"/>
<circle cx="879.3" cy="20" r="5.8" fill="#cdcdcd" stroke="#777" stroke-width="0.8"/>
<circle cx="879.3" cy="20" r="2.1" fill="#fff" stroke="#666" stroke-width="0.9"/>
<g transform="rotate(-5 914 20.5)">
<rect x="903.5" y="10" width="21" height="21" rx="1.5" fill="#fafafa" stroke="#707070" stroke-width="0.9"/>
<rect x="903.5" y="10" width="21" height="5" fill="#58b030"/>
<text x="914" y="27.8" font-size="12.5" fill="#1a1a1a" text-anchor="middle" stroke="#1a1a1a" stroke-width="0.35">17</text>
</g>
<circle cx="969" cy="21.5" r="6.5" fill="#fff" stroke="#bcbcbc" stroke-width="1"/>
<circle cx="969" cy="473" r="6.5" fill="#fff" stroke="#bcbcbc" stroke-width="1"/>
<circle cx="968.5" cy="580" r="6.5" fill="#fff" stroke="#bcbcbc" stroke-width="1"/>
<circle cx="968.5" cy="580" r="3" fill="#111"/>
<circle cx="969" cy="682.3" r="6.5" fill="#fff" stroke="#bcbcbc" stroke-width="1"/>
<rect x="953.5" y="36.5" width="32" height="21" fill="url(#btn)" stroke="#a8a8a8" stroke-width="1" shape-rendering="crispEdges"/>
<rect x="953.5" y="85.5" width="32" height="21" fill="url(#btn)" stroke="#a8a8a8" stroke-width="1" shape-rendering="crispEdges"/>
<rect x="953.5" y="110.5" width="32" height="21" fill="url(#btn)" stroke="#a8a8a8" stroke-width="1" shape-rendering="crispEdges"/>
<rect x="953.5" y="135.5" width="32" height="21" fill="url(#btn)" stroke="#a8a8a8" stroke-width="1" shape-rendering="crispEdges"/>
<rect x="953.5" y="160.5" width="32" height="21" fill="url(#btn)" stroke="#a8a8a8" stroke-width="1" shape-rendering="crispEdges"/>
<rect x="953.5" y="185.5" width="32" height="21" fill="url(#btn)" stroke="#a8a8a8" stroke-width="1" shape-rendering="crispEdges"/>
<rect x="953.5" y="210.5" width="32" height="21" fill="url(#btn)" stroke="#a8a8a8" stroke-width="1" shape-rendering="crispEdges"/>
<rect x="953.5" y="235.5" width="32" height="21" fill="url(#btn)" stroke="#a8a8a8" stroke-width="1" shape-rendering="crispEdges"/>
<rect x="953.5" y="260.5" width="32" height="21" fill="url(#btn)" stroke="#a8a8a8" stroke-width="1" shape-rendering="crispEdges"/>
<rect x="953.5" y="285.5" width="32" height="21" fill="url(#btn)" stroke="#a8a8a8" stroke-width="1" shape-rendering="crispEdges"/>
<rect x="953.5" y="311.5" width="32" height="21" fill="url(#btn)" stroke="#a8a8a8" stroke-width="1" shape-rendering="crispEdges"/>
<rect x="953.5" y="335.5" width="32" height="21" fill="url(#btn)" stroke="#a8a8a8" stroke-width="1" shape-rendering="crispEdges"/>
<rect x="953.5" y="361.5" width="32" height="21" fill="url(#btn)" stroke="#a8a8a8" stroke-width="1" shape-rendering="crispEdges"/>
<rect x="953.5" y="385.5" width="32" height="21" fill="url(#btn)" stroke="#a8a8a8" stroke-width="1" shape-rendering="crispEdges"/>
<rect x="953.5" y="408.5" width="32" height="21" fill="url(#btn)" stroke="#a8a8a8" stroke-width="1" shape-rendering="crispEdges"/>
<circle cx="966.8" cy="45" r="4.2" fill="#d8d8d8" stroke="#333" stroke-width="1.4"/>
<line x1="969.8" y1="48.2" x2="975.4" y2="53.4" stroke="#222" stroke-width="1.8" stroke-linecap="round"/>
<rect x="953.5" y="61.5" width="32" height="21" fill="#fbf6f8" stroke="#a8a8a8" stroke-width="1" shape-rendering="crispEdges"/>
<polygon points="954.5,82 954.5,66 956,63 957.5,68 958.5,82" fill="#4a52a8"/>
<polygon points="958.5,82 958.5,70 960,66 962,74 964,80 966,72 967.5,64 969,72 971,80 971.5,82" fill="#4a52a8"/>
<polygon points="973,82 973,78 974,82" fill="#4a52a8"/><polygon points="977.5,82 979,76 980.5,72 982,77 983,82" fill="#4a52a8"/>
<rect x="957" y="62" width="1" height="20" fill="#d8d8e8"/><rect x="971.5" y="62" width="1" height="20" fill="#c8c8d8"/>
<polyline points="955,66 957,69 960,70 966,69 969,67 971,70 973,68.5 976,72 978,68.5 982,69" fill="none" stroke="#e01010" stroke-width="1"/>
<line x1="957" y1="95.5" x2="981" y2="95.5" stroke="#e23030" stroke-width="2.4"/>
<line x1="957" y1="120.3" x2="981" y2="120.3" stroke="#2a2aff" stroke-width="2.4"/>
<path d="M957.2 151.2 L972.6 135.4 M965.4 156.4 L980.8 140.6" stroke="#222" stroke-width="1.1" fill="none"/>
<polyline points="965.4,156.4 962.4,146.6 970.6,150.4 970.4,143.4 975.6,145.4 972.6,135.6 979.2,139.6" fill="none" stroke="#5a44f8" stroke-width="1.1" stroke-linejoin="round"/>
<line x1="958.5" y1="181.70000000000002" x2="980.2" y2="160.3" stroke="#111" stroke-width="1.6"/>
<path d="M961 173.60000000000002 L967 173.60000000000002 L966.1 178.8" fill="none" stroke="#2222e6" stroke-width="1.4" stroke-linejoin="miter"/>
<path d="M973.5 160.60000000000002 L972.4 167.10000000000002 L978.6 166.3" fill="none" stroke="#2222e6" stroke-width="1.4" stroke-linejoin="miter"/>
<line x1="958.5" y1="206.70000000000002" x2="980.2" y2="185.3" stroke="#111" stroke-width="1.6"/>
<path d="M961 198.60000000000002 L967 198.60000000000002 L966.1 203.8" fill="none" stroke="#2222e6" stroke-width="1.4" stroke-linejoin="miter"/>
<path d="M973.5 185.60000000000002 L972.4 192.10000000000002 L978.6 191.3" fill="none" stroke="#2222e6" stroke-width="1.4" stroke-linejoin="miter"/>
<text x="962.4" y="196.9" font-size="11" fill="#f01020" text-anchor="middle" font-weight="bold">Σ</text>
<polygon points="968,215.5 971.2,215.5 971.2,218.2 974.5,218.2 969.6,225.8 964.8,218.2 968,218.2" fill="#f00c0c"/>
<polygon points="969.6,240 974.5,247.6 971.2,247.6 971.2,250.8 968,250.8 968,247.6 964.8,247.6" fill="#1010ff"/>
<path d="M960 266.5 h2.6 v3 h3 v2.6 h-3 v3.6 h-2.6 v-3.6 h-3 v-2.6 h3 Z" fill="#a8d070" stroke="#68a828" stroke-width="0.8"/>
<polygon points="970.8,266.3 974.8,266.3 974.8,269.5 978.4,269.5 972.8,276 967.2,269.5 970.8,269.5" fill="#e01818"/>
<circle cx="981" cy="275" r="2.3" fill="none" stroke="#f01010" stroke-width="1"/>
<line x1="957" y1="291.9" x2="981.4" y2="291.9" stroke="#3a3a3a" stroke-width="1.8" stroke-dasharray="6.6 2.4"/>
<line x1="957" y1="296.9" x2="981.4" y2="296.9" stroke="#3a3a3a" stroke-width="1.8" stroke-dasharray="6.6 2.4"/>
<line x1="957" y1="301.9" x2="981.4" y2="301.9" stroke="#3a3a3a" stroke-width="1.8" stroke-dasharray="6.6 2.4"/>
<path d="M956 313 H972 M956 330.6 H972 M964 314 V330" stroke="#1010ff" stroke-width="1.2" fill="none"/>
<polygon points="964,313.6 966.4,318 961.6,318" fill="#1010ff"/><polygon points="964,330 966.4,325.6 961.6,325.6" fill="#1010ff"/>
<text x="977.1" y="329.4" font-size="18" fill="#111" text-anchor="middle"  textLength="8.6" lengthAdjust="spacingAndGlyphs">%</text>
<line x1="958.8" y1="340.2" x2="971" y2="340.2" stroke="#2a50ff" stroke-width="1.2"/>
<line x1="958.8" y1="346.0" x2="971" y2="346.0" stroke="#111" stroke-width="1.4"/>
<line x1="958.8" y1="352.0" x2="971" y2="352.0" stroke="#f04030" stroke-width="1.6"/>
<text x="977.1" y="353.7" font-size="18" fill="#111" text-anchor="middle"  textLength="8.6" lengthAdjust="spacingAndGlyphs">%</text>
<rect x="960" y="362" width="19" height="20" fill="#dcdce4"/>
<circle cx="969.4" cy="372" r="7" fill="#e8e0e0" stroke="#c02020" stroke-width="2.6"/>
<line x1="964.4" y1="367" x2="974.4" y2="377" stroke="#c02020" stroke-width="2.6"/>
<circle cx="969" cy="396" r="6.2" fill="url(#redball)"/>
<path d="M963.5 417 Q968 411.5 973.5 413.5 L974.5 411 L977 417.5 L970.5 418 L972 415.8 Q968.5 415 966.5 417.5 Z" fill="#2a6ad8"/>
<path d="M975 421 Q970.5 426.5 965 424.5 L964 427 L961.5 420.5 L968 420 L966.5 422.2 Q970 423 972 420.5 Z" fill="#2a6ad8"/>
<rect x="953.5" y="487.5" width="32" height="21" fill="#fff" stroke="#a8a8a8" stroke-width="1" shape-rendering="crispEdges"/>
<polygon points="962,492.5 965.4,492.5 965.4,496.3 969,496.3 963.7,502.5 958.3,496.3 962,496.3" fill="#e02418"/>
<polygon points="976.5,492.5 982,498.7 978.3,498.7 978.3,502.5 974.7,502.5 974.7,498.7 971,498.7" fill="#6cb830"/>
<rect x="953.5" y="513.5" width="32" height="21" fill="url(#btn)" stroke="#a8a8a8" stroke-width="1" shape-rendering="crispEdges"/>
<line x1="958.8" y1="517.8" x2="971" y2="517.8" stroke="#2a50ff" stroke-width="1.2"/>
<line x1="958.8" y1="523.6" x2="971" y2="523.6" stroke="#111" stroke-width="1.4"/>
<line x1="958.8" y1="529.6" x2="971" y2="529.6" stroke="#f04030" stroke-width="1.6"/>
<text x="977.1" y="531.3" font-size="18" fill="#111" text-anchor="middle"  textLength="8.6" lengthAdjust="spacingAndGlyphs">%</text>
<rect x="953.5" y="541.5" width="32" height="21" fill="url(#btn)" stroke="#a8a8a8" stroke-width="1" shape-rendering="crispEdges"/>
<line x1="957.5" y1="555" x2="983" y2="555" stroke="#30a020" stroke-width="1" stroke-dasharray="3 2"/>
<line x1="977" y1="552" x2="977" y2="560" stroke="#5050c0" stroke-width="0.8" stroke-dasharray="2 2"/>
<path d="M955.5 545 Q962 548 967.5 558.5 Q972 553 977 541.5" fill="none" stroke="#2020e8" stroke-width="1.8"/>
<path d="M955.5 544.5 Q963 546 969.5 556.5 Q975 554 981 541.5" fill="none" stroke="#e81818" stroke-width="1.8"/>
<rect x="953.5" y="595.5" width="32" height="21" fill="#fff" stroke="#a8a8a8" stroke-width="1" shape-rendering="crispEdges"/>
<polygon points="962,600.5 965.4,600.5 965.4,604.3 969,604.3 963.7,610.5 958.3,604.3 962,604.3" fill="#e02418"/>
<polygon points="976.5,600.5 982,606.7 978.3,606.7 978.3,610.5 974.7,610.5 974.7,606.7 971,606.7" fill="#6cb830"/>
<rect x="953.5" y="619.5" width="32" height="21" fill="url(#btn)" stroke="#a8a8a8" stroke-width="1" shape-rendering="crispEdges"/>
<line x1="958.8" y1="623.8" x2="971" y2="623.8" stroke="#2a50ff" stroke-width="1.2"/>
<line x1="958.8" y1="629.6" x2="971" y2="629.6" stroke="#111" stroke-width="1.4"/>
<line x1="958.8" y1="635.6" x2="971" y2="635.6" stroke="#f04030" stroke-width="1.6"/>
<text x="977.1" y="637.3" font-size="18" fill="#111" text-anchor="middle"  textLength="8.6" lengthAdjust="spacingAndGlyphs">%</text>
<rect x="953.5" y="643.5" width="32" height="21" fill="url(#btn)" stroke="#a8a8a8" stroke-width="1" shape-rendering="crispEdges"/>
<line x1="957.5" y1="657" x2="983" y2="657" stroke="#30a020" stroke-width="1" stroke-dasharray="3 2"/>
<line x1="977" y1="654" x2="977" y2="662" stroke="#5050c0" stroke-width="0.8" stroke-dasharray="2 2"/>
<path d="M955.5 647 Q962 650 967.5 660.5 Q972 655 977 643.5" fill="none" stroke="#2020e8" stroke-width="1.8"/>
<path d="M955.5 646.5 Q963 648 969.5 658.5 Q975 656 981 643.5" fill="none" stroke="#e81818" stroke-width="1.8"/>
<rect x="953.5" y="697.5" width="32" height="21" fill="#fff" stroke="#a8a8a8" stroke-width="1" shape-rendering="crispEdges"/>
<polygon points="962,702.5 965.4,702.5 965.4,706.3 969,706.3 963.7,712.5 958.3,706.3 962,706.3" fill="#e02418"/>
<polygon points="976.5,702.5 982,708.7 978.3,708.7 978.3,712.5 974.7,712.5 974.7,708.7 971,708.7" fill="#6cb830"/>
<rect x="953.5" y="722.5" width="32" height="21" fill="url(#btn)" stroke="#a8a8a8" stroke-width="1" shape-rendering="crispEdges"/>
<line x1="958.8" y1="726.8" x2="971" y2="726.8" stroke="#2a50ff" stroke-width="1.2"/>
<line x1="958.8" y1="732.6" x2="971" y2="732.6" stroke="#111" stroke-width="1.4"/>
<line x1="958.8" y1="738.6" x2="971" y2="738.6" stroke="#f04030" stroke-width="1.6"/>
<text x="977.1" y="740.3" font-size="18" fill="#111" text-anchor="middle"  textLength="8.6" lengthAdjust="spacingAndGlyphs">%</text>
<rect x="953.5" y="747.5" width="32" height="21" fill="url(#btn)" stroke="#a8a8a8" stroke-width="1" shape-rendering="crispEdges"/>
<line x1="957.5" y1="761" x2="983" y2="761" stroke="#30a020" stroke-width="1" stroke-dasharray="3 2"/>
<line x1="977" y1="758" x2="977" y2="766" stroke="#5050c0" stroke-width="0.8" stroke-dasharray="2 2"/>
<path d="M955.5 751 Q962 754 967.5 764.5 Q972 759 977 747.5" fill="none" stroke="#2020e8" stroke-width="1.8"/>
<path d="M955.5 750.5 Q963 752 969.5 762.5 Q975 760 981 747.5" fill="none" stroke="#e81818" stroke-width="1.8"/>
</svg>
</body></html>
